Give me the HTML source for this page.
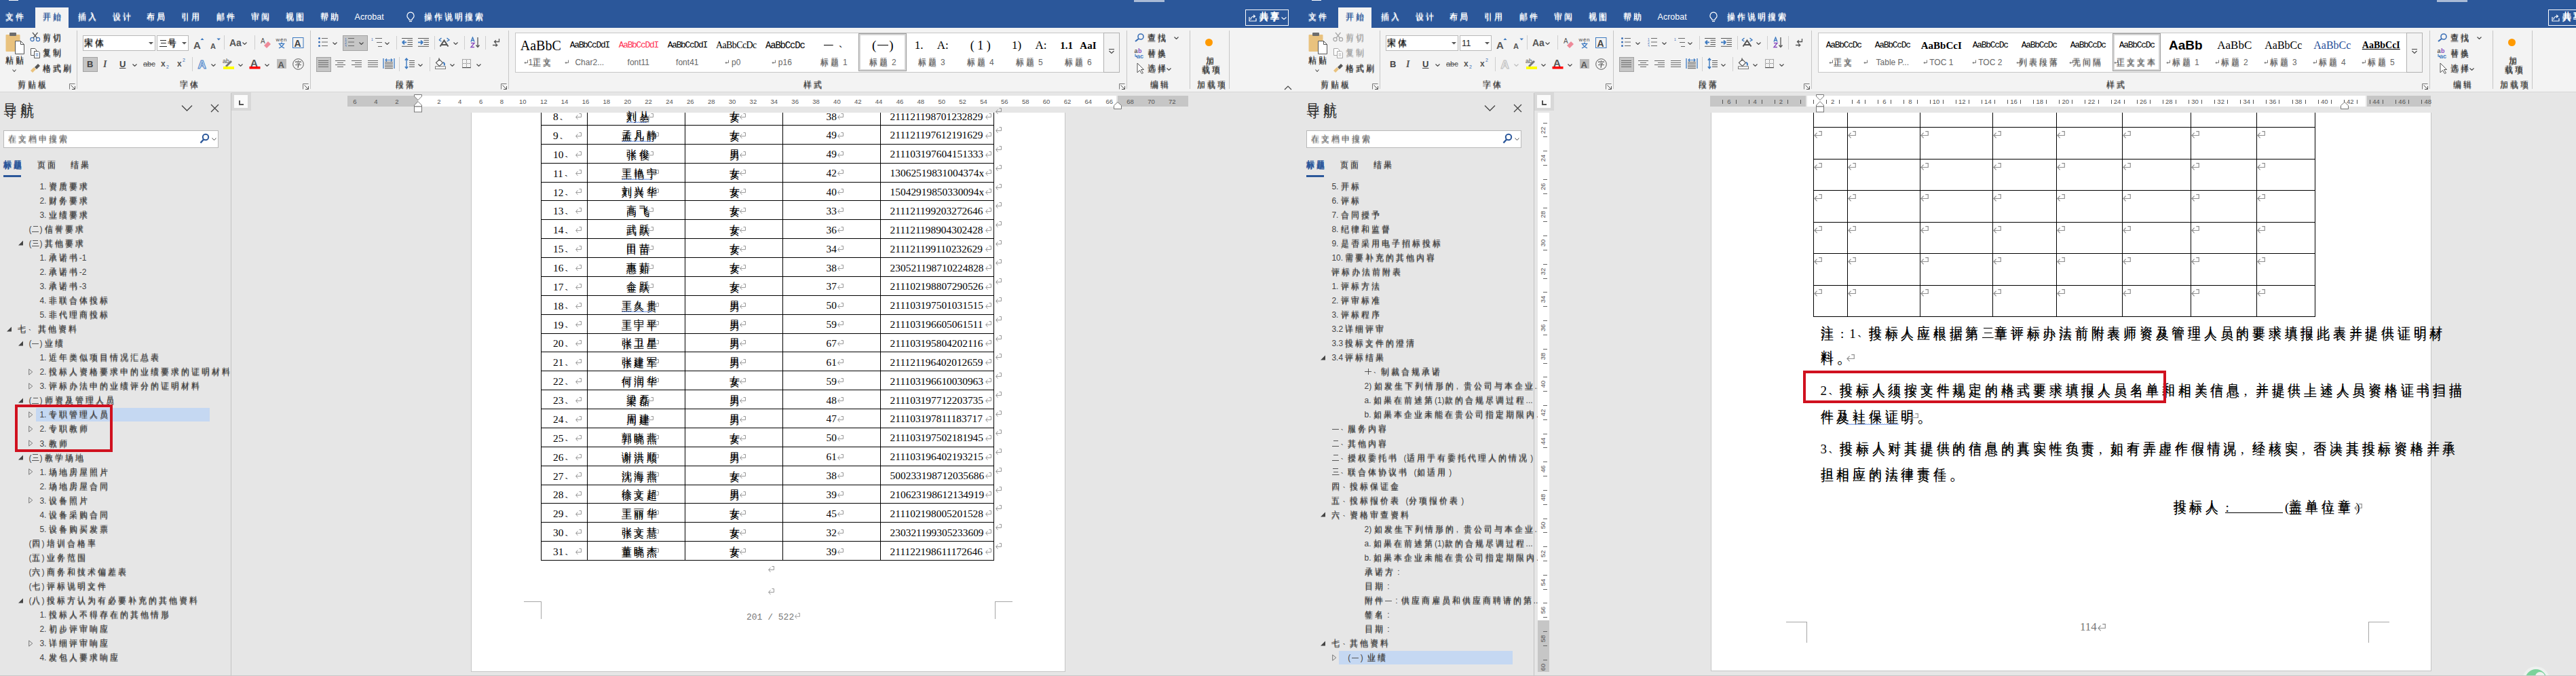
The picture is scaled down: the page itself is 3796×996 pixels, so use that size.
<!DOCTYPE html><html><head><meta charset="utf-8"><style>
*{margin:0;padding:0}
body{width:3796px;height:996px;overflow:hidden;background:#e6e6e6;position:relative}
.w{position:absolute;top:0;height:996px;overflow:hidden;background:#e6e6e6}
.w div,.w svg{position:absolute}
.t{white-space:nowrap}
.ls{font-family:"Liberation Sans",sans-serif}
.lr{font-family:"Liberation Serif",serif}
.lm{font-family:"Liberation Mono",monospace}
.c{font-family:"Liberation Sans",sans-serif;line-height:0;letter-spacing:.25em;text-shadow:0 .2em 0 currentColor;vertical-align:.1em}
.p{display:inline-block;width:1em;line-height:0}
.g{display:inline-block;width:1em;height:.8em;vertical-align:-.02em;background-repeat:no-repeat}
.g1{background-image:linear-gradient(currentColor,currentColor);background-size:.86em .075em;background-position:.07em .42em}
.g2{background-image:linear-gradient(currentColor,currentColor),linear-gradient(currentColor,currentColor);background-size:.6em .075em,.86em .075em;background-position:.2em .08em,.07em .72em}
.g3{background-image:linear-gradient(currentColor,currentColor),linear-gradient(currentColor,currentColor),linear-gradient(currentColor,currentColor);background-size:.7em .075em,.6em .075em,.88em .075em;background-position:.15em .02em,.2em .38em,.06em .74em}
.g10{background-image:linear-gradient(currentColor,currentColor),linear-gradient(currentColor,currentColor);background-size:.86em .075em,.075em .9em;background-position:.07em .36em,.46em -.05em}
svg text{white-space:pre}
</style></head><body>
<svg width="0" height="0" style="position:absolute"><defs><symbol id="rt" viewBox="0 0 12 11"><path d="M7.3 0.6H11.3V6.5H0.9M4.6 2.7L0.9 6.5L4.6 10.3" fill="none" stroke="#8f8f8f" stroke-width="1.15"/></symbol></defs></svg>
<div class="w" style="left:0;width:1905px">
<div style="left:-30px;top:0px;width:1950px;height:41px;background:#2b579a"></div>
<div style="left:13px;top:0px;width:14px;height:1px;background:#fff"></div>
<div style="left:1671px;top:0px;width:45px;height:3px;background:#aabbd6"></div>
<div style="left:52px;top:11px;width:49px;height:30px;background:#f3f3f3"></div>
<div class="t ls" style="top:17.4px;font-size:12px;line-height:16px;color:#fff;left:8px;"><span class=c>文件</span></div>
<div class="t ls" style="top:17.4px;font-size:12px;line-height:16px;color:#2b579a;left:63px;"><span class=c>开始</span></div>
<div class="t ls" style="top:17.4px;font-size:12px;line-height:16px;color:#fff;left:115px;"><span class=c>插入</span></div>
<div class="t ls" style="top:17.4px;font-size:12px;line-height:16px;color:#fff;left:166px;"><span class=c>设计</span></div>
<div class="t ls" style="top:17.4px;font-size:12px;line-height:16px;color:#fff;left:216px;"><span class=c>布局</span></div>
<div class="t ls" style="top:17.4px;font-size:12px;line-height:16px;color:#fff;left:267px;"><span class=c>引用</span></div>
<div class="t ls" style="top:17.4px;font-size:12px;line-height:16px;color:#fff;left:319px;"><span class=c>邮件</span></div>
<div class="t ls" style="top:17.4px;font-size:12px;line-height:16px;color:#fff;left:370px;"><span class=c>审阅</span></div>
<div class="t ls" style="top:17.4px;font-size:12px;line-height:16px;color:#fff;left:420.5px;"><span class=c>视图</span></div>
<div class="t ls" style="top:17.4px;font-size:12px;line-height:16px;color:#fff;left:471.5px;"><span class=c>帮助</span></div>
<div class="t ls" style="top:17.17px;font-size:12.5px;line-height:16px;color:#fff;left:522.6px;">Acrobat</div>
<svg style="left:598px;top:17px;" width="14" height="16" viewBox="0 0 14 16"><path d="M7 1.2a5 5 0 0 0-3 9c.8.7 1 1.3 1 2.3h4c0-1 .3-1.6 1-2.3a5 5 0 0 0-3-9z" fill="none" stroke="#fff" stroke-width="1.2"/><path d="M5 14.5h4" stroke="#fff" stroke-width="1.2"/></svg>
<div class="t ls" style="top:17.4px;font-size:12px;line-height:16px;color:#fff;left:625px;"><span class=c>操作说明搜索</span></div>
<div style="left:1835px;top:14px;width:64px;height:24px;border:1px solid #fff;box-sizing:border-box"></div>
<svg style="left:1840px;top:20px;" width="12" height="12" viewBox="0 0 12 12"><path d="M1 5v6h10V7" fill="none" stroke="#fff" stroke-width="1.2"/><path d="M3 9c0-3 2-5 6-5M7 2l2.5 2L7 6" fill="none" stroke="#fff" stroke-width="1.2"/></svg>
<div class="t ls" style="top:15.94px;font-size:13px;line-height:17px;color:#fff;left:1856px;font-weight:bold"><span class=c>共享</span></div>
<svg style="left:1888px;top:25px;" width="8" height="4" viewBox="0 0 8 4"><path d="M0.5 0.5L4 3.5L7.5 0.5" fill="none" stroke="#fff" stroke-width="1.1"/></svg>
<div style="left:-30px;top:41px;width:1950px;height:94px;background:#f3f3f3"></div>
<div style="left:-30px;top:135px;width:1950px;height:1px;background:#d8d8d8"></div>
<div style="left:113px;top:45px;width:1px;height:86px;background:#c6c6c6"></div>
<div style="left:457px;top:45px;width:1px;height:86px;background:#c6c6c6"></div>
<div style="left:749px;top:45px;width:1px;height:86px;background:#c6c6c6"></div>
<div style="left:1660px;top:45px;width:1px;height:86px;background:#c6c6c6"></div>
<div style="left:1753px;top:45px;width:1px;height:86px;background:#c6c6c6"></div>
<div style="left:1811px;top:45px;width:1px;height:86px;background:#c6c6c6"></div>
<div class="t ls" style="top:116.9px;font-size:12px;line-height:16px;color:#444;left:26px;"><span class=c>剪贴板</span></div>
<div class="t ls" style="top:116.9px;font-size:12px;line-height:16px;color:#444;left:265px;"><span class=c>字体</span></div>
<div class="t ls" style="top:116.9px;font-size:12px;line-height:16px;color:#444;left:583px;"><span class=c>段落</span></div>
<div class="t ls" style="top:116.9px;font-size:12px;line-height:16px;color:#444;left:1184px;"><span class=c>样式</span></div>
<div class="t ls" style="top:116.9px;font-size:12px;line-height:16px;color:#444;left:1695px;"><span class=c>编辑</span></div>
<div class="t ls" style="top:116.9px;font-size:12px;line-height:16px;color:#444;left:1764px;"><span class=c>加载项</span></div>
<svg style="left:101.5px;top:122.5px;" width="9" height="9" viewBox="0 0 9 9"><path d="M0.5 8.5V0.5H8.5" fill="none" stroke="#777" stroke-width="1"/><path d="M2.5 2.5L8 8M4 8.5H8.5V4" fill="none" stroke="#555" stroke-width="1"/></svg>
<svg style="left:446px;top:122.5px;" width="9" height="9" viewBox="0 0 9 9"><path d="M0.5 8.5V0.5H8.5" fill="none" stroke="#777" stroke-width="1"/><path d="M2.5 2.5L8 8M4 8.5H8.5V4" fill="none" stroke="#555" stroke-width="1"/></svg>
<svg style="left:738px;top:122.5px;" width="9" height="9" viewBox="0 0 9 9"><path d="M0.5 8.5V0.5H8.5" fill="none" stroke="#777" stroke-width="1"/><path d="M2.5 2.5L8 8M4 8.5H8.5V4" fill="none" stroke="#555" stroke-width="1"/></svg>
<svg style="left:1649px;top:122.5px;" width="9" height="9" viewBox="0 0 9 9"><path d="M0.5 8.5V0.5H8.5" fill="none" stroke="#777" stroke-width="1"/><path d="M2.5 2.5L8 8M4 8.5H8.5V4" fill="none" stroke="#555" stroke-width="1"/></svg>
<svg style="left:1892px;top:126px;" width="12" height="7" viewBox="0 0 12 7"><path d="M1 6L6 1L11 6" fill="none" stroke="#444" stroke-width="1.2"/></svg>
<svg style="left:7px;top:47px;" width="31" height="34" viewBox="0 0 31 34"><rect x="1.5" y="4" width="21" height="25" rx="1" fill="#e9c27e"/><rect x="7" y="1" width="10" height="5" rx="1" fill="#6d6d6d"/><path d="M15.5 13.5h8l5 5v14h-13z" fill="#fff" stroke="#555"/><path d="M23.5 13.5v5h5" fill="none" stroke="#555"/></svg>
<div class="t ls" style="top:80.9px;font-size:12px;line-height:16px;color:#333;left:8px;"><span class=c>粘贴</span></div>
<svg style="left:18px;top:102px;" width="6" height="4" viewBox="0 0 6 4"><path d="M0.5 0.5L3 3.5L5.5 0.5" fill="none" stroke="#555" stroke-width="1.1"/></svg>
<svg style="left:44px;top:47px;" width="16" height="15" viewBox="0 0 16 15"><circle cx="3.5" cy="11" r="2.6" fill="none" stroke="#3c70b6" stroke-width="1.2"/><circle cx="12" cy="11" r="2.6" fill="none" stroke="#3c70b6" stroke-width="1.2"/><path d="M5 9L11.5 1M10.5 9L4 1" stroke="#555" stroke-width="1.2"/></svg>
<div class="t ls" style="top:48.4px;font-size:12px;line-height:16px;color:#333;left:63px;"><span class=c>剪切</span></div>
<svg style="left:44px;top:70px;" width="16" height="16" viewBox="0 0 16 16"><path d="M1.5 1.5h6l2 2v8h-8z" fill="#fff" stroke="#555"/><path d="M6.5 5.5h6l2 2v8h-8z" fill="#fff" stroke="#555"/><path d="M8.5 9.5h4M8.5 12h4" stroke="#3c70b6"/></svg>
<div class="t ls" style="top:70.4px;font-size:12px;line-height:16px;color:#333;left:63px;"><span class=c>复制</span></div>
<svg style="left:44px;top:92px;" width="16" height="16" viewBox="0 0 16 16"><path d="M1 12l5-5 3 3-5 5z" fill="#e9c27e"/><path d="M7 7l5-5 3 3-5 5z" fill="#555"/></svg>
<div class="t ls" style="top:93.4px;font-size:12px;line-height:16px;color:#333;left:63px;"><span class=c>格式刷</span></div>
<div style="left:122px;top:52px;width:107px;height:23px;background:#fff;border:1px solid #b9b9b9;box-sizing:border-box"></div>
<div class="t ls" style="top:55.44px;font-size:13px;line-height:17px;color:#222;left:124px;"><span class=c>宋体</span></div>
<svg style="left:219px;top:62px;" width="7" height="4" viewBox="0 0 7 4"><path d="M0 0H7L3.5 3.5Z" fill="#555"/></svg>
<div style="left:231px;top:52px;width:47px;height:23px;background:#fff;border:1px solid #b9b9b9;box-sizing:border-box"></div>
<div class="t ls" style="top:55.44px;font-size:13px;line-height:17px;color:#222;left:234px;"><span class="g g3"></span><span class=c>号</span></div>
<svg style="left:268px;top:62px;" width="7" height="4" viewBox="0 0 7 4"><path d="M0 0H7L3.5 3.5Z" fill="#555"/></svg>
<svg style="left:285px;top:55px;" width="17" height="18" viewBox="0 0 17 18"><text x="0" y="17" font-family="Liberation Sans" font-weight="bold" font-size="15" fill="#555">A</text><path d="M10.5 4l2.5-3 2.5 3z" fill="#3c79c0"/></svg>
<svg style="left:310px;top:55px;" width="16" height="18" viewBox="0 0 16 18"><text x="0" y="17" font-family="Liberation Sans" font-weight="bold" font-size="11" fill="#555">A</text><path d="M9.5 1.5h5.5l-2.75 3z" fill="#3c79c0"/></svg>
<div style="left:330px;top:52px;width:1px;height:21px;background:#cfcfcf"></div>
<div class="t ls" style="top:54.19px;font-size:14px;line-height:18px;color:#555;left:338px;font-weight:bold">Aa</div>
<svg style="left:357px;top:62px;" width="7" height="4" viewBox="0 0 7 4"><path d="M0.5 0.5L3.5 3.5L6.5 0.5" fill="none" stroke="#444" stroke-width="1.1"/></svg>
<div style="left:375px;top:52px;width:1px;height:21px;background:#cfcfcf"></div>
<svg style="left:384px;top:54px;" width="16" height="17" viewBox="0 0 16 17"><text x="0" y="10" font-family="Liberation Sans" font-size="10" fill="#555">A</text><path d="M5 13l6-6 4 4-6 6z" fill="#ee8a99"/></svg>
<svg style="left:406px;top:54px;" width="18" height="18" viewBox="0 0 18 18"><text x="0.5" y="7" font-family="Liberation Sans" font-size="8" fill="#444" textLength="16">wén</text><path d="M9 8.3v1.6M4.5 10.4h9M6 10.8c1.3 3 3.5 4.8 7 6M12 10.8c-1.3 3-3.5 4.8-7 6" fill="none" stroke="#3c79c0" stroke-width="1.4"/></svg>
<svg style="left:431px;top:55px;" width="17" height="16" viewBox="0 0 17 16"><rect x="0.5" y="0.5" width="15.5" height="15" fill="none" stroke="#3c79c0"/><text x="2.5" y="13.5" font-family="Liberation Sans" font-weight="bold" font-size="14" fill="#444">A</text></svg>
<div style="left:122px;top:83.5px;width:22px;height:22.5px;background:#c6c6c6;border:1px solid #a3a3a3;box-sizing:border-box"></div>
<div class="t ls" style="top:86.18px;font-size:13px;line-height:17px;color:#444;left:128px;font-weight:bold">B</div>
<div class="t lr" style="top:85.81px;font-size:14px;line-height:18px;color:#555;left:152px;font-style:italic;font-weight:bold">I</div>
<div class="t ls" style="top:86.18px;font-size:13px;line-height:17px;color:#444;left:176px;font-weight:bold;text-decoration:underline">U</div>
<svg style="left:195px;top:94px;" width="7" height="4" viewBox="0 0 7 4"><path d="M0.5 0.5L3.5 3.5L6.5 0.5" fill="none" stroke="#444" stroke-width="1.1"/></svg>
<svg style="left:211px;top:87px;" width="18" height="14" viewBox="0 0 18 14"><text x="0" y="11" font-family="Liberation Sans" font-size="11" fill="#555">abc</text><path d="M0 7.5h18" stroke="#555"/></svg>
<svg style="left:237px;top:87px;" width="14" height="15" viewBox="0 0 14 15"><text x="0" y="11" font-family="Liberation Sans" font-weight="bold" font-size="12" fill="#555">x</text><text x="8" y="14" font-family="Liberation Sans" font-size="7" fill="#3c70b6">2</text></svg>
<svg style="left:261px;top:85px;" width="14" height="15" viewBox="0 0 14 15"><text x="0" y="13" font-family="Liberation Sans" font-weight="bold" font-size="12" fill="#555">x</text><text x="8" y="6" font-family="Liberation Sans" font-size="7" fill="#3c70b6">2</text></svg>
<div style="left:283px;top:84px;width:1px;height:21px;background:#cfcfcf"></div>
<svg style="left:291px;top:85px;" width="17" height="17" viewBox="0 0 17 17"><text x="0.5" y="15.5" font-family="Liberation Sans" font-weight="bold" font-size="17" fill="#fff" stroke="#4a84c8" stroke-width="1.1">A</text></svg>
<svg style="left:311px;top:94px;" width="7" height="4" viewBox="0 0 7 4"><path d="M0.5 0.5L3.5 3.5L6.5 0.5" fill="none" stroke="#444" stroke-width="1.1"/></svg>
<svg style="left:328px;top:85px;" width="18" height="18" viewBox="0 0 18 18"><text x="0" y="8" font-family="Liberation Sans" font-size="9" fill="#555">ab</text><path d="M4 12l8-8 2 2-8 8z" fill="#777"/><rect x="1" y="13" width="16" height="4" fill="#ffff00"/></svg>
<svg style="left:351px;top:94px;" width="7" height="4" viewBox="0 0 7 4"><path d="M0.5 0.5L3.5 3.5L6.5 0.5" fill="none" stroke="#444" stroke-width="1.1"/></svg>
<svg style="left:367px;top:85px;" width="18" height="18" viewBox="0 0 18 18"><text x="2" y="13" font-family="Liberation Sans" font-weight="bold" font-size="15" fill="#555">A</text><rect x="0.5" y="13" width="16" height="3.5" fill="#ff0000"/></svg>
<svg style="left:390px;top:94px;" width="7" height="4" viewBox="0 0 7 4"><path d="M0.5 0.5L3.5 3.5L6.5 0.5" fill="none" stroke="#444" stroke-width="1.1"/></svg>
<svg style="left:408px;top:87px;" width="14" height="14" viewBox="0 0 14 14"><rect width="14" height="14" fill="#bdbdbd"/><text x="1.5" y="12.5" font-family="Liberation Sans" font-weight="bold" font-size="13" fill="#555">A</text></svg>
<svg style="left:431px;top:86px;" width="17" height="17" viewBox="0 0 17 17"><circle cx="8.5" cy="8.5" r="7.8" fill="none" stroke="#555"/><path d="M8.5 3.2v1.3M4.6 6.2V4.8h7.8v1.4M6 7h4.8l-2.3 2M4.2 9.6h8.6M8.5 8.8v4.6l-1.4-.8" fill="none" stroke="#555" stroke-width="1"/></svg>
<svg style="left:469px;top:55px;" width="15" height="14" viewBox="0 0 15 14"><circle cx="1.5" cy="1.5" r="1.5" fill="#3c70b6"/><circle cx="1.5" cy="7" r="1.5" fill="#3c70b6"/><circle cx="1.5" cy="12.5" r="1.5" fill="#3c70b6"/><rect x="5" y="1.0" width="9" height="1" fill="#666"/><rect x="5" y="6.5" width="9" height="1" fill="#666"/><rect x="5" y="12.0" width="9" height="1" fill="#666"/></svg>
<svg style="left:490px;top:62px;" width="7" height="4" viewBox="0 0 7 4"><path d="M0.5 0.5L3.5 3.5L6.5 0.5" fill="none" stroke="#444" stroke-width="1.1"/></svg>
<div style="left:505px;top:52px;width:36.5px;height:22.5px;background:#c6c6c6;border:1px solid #a3a3a3;box-sizing:border-box"></div>
<svg style="left:508px;top:55px;" width="15" height="14" viewBox="0 0 15 14"><text x="0" y="5" font-family="Liberation Sans" font-size="5" fill="#3c70b6">1</text><text x="0" y="10" font-family="Liberation Sans" font-size="5" fill="#3c70b6">2</text><text x="0" y="15" font-family="Liberation Sans" font-size="5" fill="#3c70b6">3</text><rect x="5" y="1.0" width="9" height="1" fill="#666"/><rect x="5" y="6.5" width="9" height="1" fill="#666"/><rect x="5" y="12.0" width="9" height="1" fill="#666"/></svg>
<svg style="left:529px;top:62px;" width="7" height="4" viewBox="0 0 7 4"><path d="M0.5 0.5L3.5 3.5L6.5 0.5" fill="none" stroke="#444" stroke-width="1.1"/></svg>
<svg style="left:547px;top:55px;" width="17" height="14" viewBox="0 0 17 14"><text x="0" y="5" font-family="Liberation Sans" font-size="5" fill="#3c70b6">1</text><rect x="6" y="1" width="10" height="1" fill="#666"/><rect x="8" y="7" width="8" height="1" fill="#666"/><rect x="10" y="13" width="6" height="1" fill="#666"/></svg>
<svg style="left:567px;top:62px;" width="7" height="4" viewBox="0 0 7 4"><path d="M0.5 0.5L3.5 3.5L6.5 0.5" fill="none" stroke="#444" stroke-width="1.1"/></svg>
<div style="left:584px;top:53px;width:1px;height:20px;background:#cfcfcf"></div>
<svg style="left:591px;top:55px;" width="18" height="15" viewBox="0 0 18 15"><path d="M1 1.5H17M9.5 4.3H17M9.5 7.4H17M9.5 10.5H17M1 13.3H17" stroke="#555" stroke-width="1"/><path d="M1.8 7.4L5 4.6M1.8 7.4L5 10.2M1.8 7.4H8" fill="none" stroke="#3c79c0" stroke-width="1.9"/></svg>
<svg style="left:615px;top:55px;" width="18" height="15" viewBox="0 0 18 15"><path d="M1 1.5H17M9.5 4.3H17M9.5 7.4H17M9.5 10.5H17M1 13.3H17" stroke="#555" stroke-width="1"/><path d="M8.2 7.4L5 4.6M8.2 7.4L5 10.2M8.2 7.4H1" fill="none" stroke="#3c79c0" stroke-width="1.9"/></svg>
<div style="left:640px;top:53px;width:1px;height:20px;background:#cfcfcf"></div>
<svg style="left:646px;top:54px;" width="18" height="16" viewBox="0 0 18 16"><path d="M2.5 14.5L8.5 5.5L14.5 14.5M4.5 12H12.5" fill="none" stroke="#555" stroke-width="2"/><path d="M1 5L4.5 2M1 5L4.5 7M12.5 2L16 5L12.5 7" fill="none" stroke="#3c79c0" stroke-width="1.4"/></svg>
<svg style="left:668px;top:62px;" width="7" height="4" viewBox="0 0 7 4"><path d="M0.5 0.5L3.5 3.5L6.5 0.5" fill="none" stroke="#444" stroke-width="1.1"/></svg>
<div style="left:684px;top:53px;width:1px;height:20px;background:#cfcfcf"></div>
<svg style="left:692px;top:54px;" width="16" height="17" viewBox="0 0 16 17"><path d="M2 7.5L4.5 1L7 7.5M2.8 5.5H6.2" fill="none" stroke="#3c79c0" stroke-width="1.3"/><path d="M2 9.5H7L2 15.5H7" fill="none" stroke="#8a4fbf" stroke-width="1.4"/><path d="M12 1V15M9.5 12.5L12 15.5L14.5 12.5" fill="none" stroke="#555" stroke-width="1.3"/></svg>
<div style="left:715px;top:53px;width:1px;height:20px;background:#cfcfcf"></div>
<svg style="left:725px;top:56px;" width="12" height="14" viewBox="0 0 12 14"><path d="M10.5 1V5.5H3.5M5.8 3.2L3.5 5.5L5.8 7.8" fill="none" stroke="#555" stroke-width="1.3"/><path d="M1 10.5H7.5M5.5 8.5L7.8 10.5L5.5 12.5" fill="none" stroke="#555" stroke-width="1.3"/></svg>
<div style="left:466px;top:83.5px;width:22px;height:22px;background:#c6c6c6;border:1px solid #a3a3a3;box-sizing:border-box"></div>
<svg style="left:469px;top:89px;" width="15" height="11" viewBox="0 0 15 11"><rect x="0" y="0" width="15" height="1" fill="#666"/><rect x="0" y="3" width="15" height="1" fill="#666"/><rect x="0" y="6" width="15" height="1" fill="#666"/><rect x="0" y="9" width="15" height="1" fill="#666"/></svg>
<svg style="left:494px;top:89px;" width="15" height="11" viewBox="0 0 15 11"><rect x="0" y="0" width="15" height="1" fill="#666"/><rect x="3" y="3" width="9" height="1" fill="#666"/><rect x="0" y="6" width="15" height="1" fill="#666"/><rect x="3" y="9" width="9" height="1" fill="#666"/></svg>
<svg style="left:518px;top:89px;" width="15" height="11" viewBox="0 0 15 11"><rect x="0" y="0" width="15" height="1" fill="#666"/><rect x="5" y="3" width="10" height="1" fill="#666"/><rect x="0" y="6" width="15" height="1" fill="#666"/><rect x="5" y="9" width="10" height="1" fill="#666"/></svg>
<svg style="left:542px;top:89px;" width="15" height="11" viewBox="0 0 15 11"><rect x="0" y="0" width="15" height="1" fill="#666"/><rect x="0" y="3" width="15" height="1" fill="#666"/><rect x="0" y="6" width="15" height="1" fill="#666"/><rect x="0" y="9" width="15" height="1" fill="#666"/></svg>
<svg style="left:564px;top:85px;" width="18" height="17" viewBox="0 0 18 17"><rect x="3" y="6.0" width="12" height="1" fill="#555"/><rect x="3" y="8.3" width="12" height="1" fill="#555"/><rect x="3" y="10.6" width="12" height="1" fill="#555"/><rect x="3" y="12.899999999999999" width="12" height="1" fill="#555"/><rect x="3" y="15.2" width="12" height="1" fill="#555"/><path d="M1 1V16M17 1V16" stroke="#3c79c0" stroke-width="1.3"/><path d="M4 3.5H14M6 1.5L4 3.5L6 5.5M12 1.5L14 3.5L12 5.5" fill="none" stroke="#3c79c0" stroke-width="1.2"/></svg>
<div style="left:588px;top:84px;width:1px;height:21px;background:#cfcfcf"></div>
<svg style="left:596px;top:85px;" width="16" height="17" viewBox="0 0 16 17"><path d="M7 4.5H15M7 7.5H15M7 10.5H15M7 13.5H15" stroke="#555" stroke-width="1"/><path d="M3 1.5V15.5M0.8 3.8L3 1.2L5.2 3.8M0.8 13.2L3 15.8L5.2 13.2" fill="none" stroke="#3c79c0" stroke-width="1.4"/></svg>
<svg style="left:616px;top:94px;" width="7" height="4" viewBox="0 0 7 4"><path d="M0.5 0.5L3.5 3.5L6.5 0.5" fill="none" stroke="#444" stroke-width="1.1"/></svg>
<div style="left:633px;top:84px;width:1px;height:21px;background:#cfcfcf"></div>
<svg style="left:640px;top:85px;" width="18" height="18" viewBox="0 0 18 18"><path d="M2.5 7.5L7.5 2.5L12.5 7.5L7.5 12.5Z" fill="#fff" stroke="#555" stroke-width="1.1"/><path d="M7 0.5V5" stroke="#555" stroke-width="1.3"/><path d="M13 7c2 .8 2.5 2.5 1.5 4.5" fill="none" stroke="#3c79c0" stroke-width="2"/><rect x="1.5" y="13" width="15" height="3.5" fill="#fff" stroke="#777"/></svg>
<svg style="left:663px;top:94px;" width="7" height="4" viewBox="0 0 7 4"><path d="M0.5 0.5L3.5 3.5L6.5 0.5" fill="none" stroke="#444" stroke-width="1.1"/></svg>
<svg style="left:680px;top:86px;" width="15" height="15" viewBox="0 0 15 15"><rect x="1" y="1" width="1" height="1" fill="#555"/><rect x="3" y="1" width="1" height="1" fill="#555"/><rect x="5" y="1" width="1" height="1" fill="#555"/><rect x="7" y="1" width="1" height="1" fill="#555"/><rect x="9" y="1" width="1" height="1" fill="#555"/><rect x="11" y="1" width="1" height="1" fill="#555"/><rect x="13" y="1" width="1" height="1" fill="#555"/><rect x="1" y="7" width="1" height="1" fill="#555"/><rect x="3" y="7" width="1" height="1" fill="#555"/><rect x="5" y="7" width="1" height="1" fill="#555"/><rect x="7" y="7" width="1" height="1" fill="#555"/><rect x="9" y="7" width="1" height="1" fill="#555"/><rect x="11" y="7" width="1" height="1" fill="#555"/><rect x="13" y="7" width="1" height="1" fill="#555"/><rect x="1" y="3" width="1" height="1" fill="#555"/><rect x="1" y="5" width="1" height="1" fill="#555"/><rect x="1" y="7" width="1" height="1" fill="#555"/><rect x="1" y="9" width="1" height="1" fill="#555"/><rect x="1" y="11" width="1" height="1" fill="#555"/><rect x="1" y="13" width="1" height="1" fill="#555"/><rect x="7" y="3" width="1" height="1" fill="#555"/><rect x="7" y="5" width="1" height="1" fill="#555"/><rect x="7" y="7" width="1" height="1" fill="#555"/><rect x="7" y="9" width="1" height="1" fill="#555"/><rect x="7" y="11" width="1" height="1" fill="#555"/><rect x="7" y="13" width="1" height="1" fill="#555"/><rect x="13" y="3" width="1" height="1" fill="#555"/><rect x="13" y="5" width="1" height="1" fill="#555"/><rect x="13" y="7" width="1" height="1" fill="#555"/><rect x="13" y="9" width="1" height="1" fill="#555"/><rect x="13" y="11" width="1" height="1" fill="#555"/><rect x="13" y="13" width="1" height="1" fill="#555"/><rect x="1" y="13" width="13" height="1.2" fill="#444"/></svg>
<svg style="left:702px;top:94px;" width="7" height="4" viewBox="0 0 7 4"><path d="M0.5 0.5L3.5 3.5L6.5 0.5" fill="none" stroke="#444" stroke-width="1.1"/></svg>
<div style="left:759px;top:47.5px;width:868px;height:59.5px;background:#fff;border:1px solid #c6c6c6;box-sizing:border-box;border-right:none"></div>
<div style="left:1626px;top:47.5px;width:24px;height:59.5px;background:#f3f3f3;border:1px solid #b1b1b1;box-sizing:border-box"></div>
<svg style="left:1633px;top:72px;" width="10" height="8" viewBox="0 0 10 8"><path d="M1 0.5h8M1.5 3l3.5 3.5L8.5 3" fill="none" stroke="#444" stroke-width="1.1"/></svg>
<svg style="left:1672px;top:49px;" width="15" height="13" viewBox="0 0 15 13"><circle cx="9" cy="5" r="4" fill="none" stroke="#3c70b6" stroke-width="1.6"/><path d="M6 8l-5 4" stroke="#3c70b6" stroke-width="2.2"/></svg>
<div class="t ls" style="top:47.9px;font-size:12px;line-height:16px;color:#333;left:1690.6px;"><span class=c>查找</span></div>
<svg style="left:1730px;top:54px;" width="7" height="4" viewBox="0 0 7 4"><path d="M0.5 0.5L3.5 3.5L6.5 0.5" fill="none" stroke="#444" stroke-width="1.1"/></svg>
<svg style="left:1671px;top:70px;" width="18" height="16" viewBox="0 0 18 16"><text x="0.5" y="7.5" font-family="Liberation Sans" font-weight="bold" font-size="9" fill="#555">a</text><text x="6" y="7.5" font-family="Liberation Sans" font-weight="bold" font-size="9" fill="#8a4fbf">b</text><text x="4" y="15.5" font-family="Liberation Sans" font-weight="bold" font-size="9" fill="#3c79c0">ac</text><path d="M2 9.5v3.5h2.5M3.3 11.8l1.2 1.2-1.2 1.2" fill="none" stroke="#3c79c0" stroke-width="1.1"/></svg>
<div class="t ls" style="top:70.9px;font-size:12px;line-height:16px;color:#333;left:1690.6px;"><span class=c>替换</span></div>
<svg style="left:1675px;top:92px;" width="11" height="17" viewBox="0 0 11 17"><path d="M1 1v14l3.5-3.5 3 5 2-1-3-5h4z" fill="#fff" stroke="#555"/></svg>
<div class="t ls" style="top:93.4px;font-size:12px;line-height:16px;color:#333;left:1690.6px;"><span class=c>选择</span></div>
<svg style="left:1719px;top:100px;" width="7" height="4" viewBox="0 0 7 4"><path d="M0.5 0.5L3.5 3.5L6.5 0.5" fill="none" stroke="#444" stroke-width="1.1"/></svg>
<div style="left:1776px;top:57px;width:11px;height:11px;border-radius:50%;background:#ff9a00;filter:blur(0.4px)"></div>
<div class="t ls" style="top:81.9px;font-size:12px;line-height:16px;color:#333;left:1777px;"><span class=c>加</span></div>
<div class="t ls" style="top:95.4px;font-size:12px;line-height:16px;color:#333;left:1771px;"><span class=c>载项</span></div>
<div style="left:765.8px;top:50px;width:62px;height:30px;overflow:hidden">
<div class="t lr" style="left:0;top:0;width:62px;text-align:center;font-size:20px;line-height:30px;color:#000;white-space:pre;;top:2.3px">AaBbC</div>
</div>
<div class="t ls" style="top:83.9px;font-size:12px;line-height:16px;color:#666;left:760.8px;width:72px;text-align:center;">1<span class=c>正文</span></div>
<svg style="left:771.5px;top:88px;" width="7" height="7" viewBox="0 0 7 7"><path d="M5.5 0.5v4H1M2.5 3L1 4.5 2.5 6" fill="none" stroke="#777"/></svg>
<div style="left:837.8px;top:50px;width:62px;height:30px;overflow:hidden">
<div class="t lm" style="left:0;top:0;width:62px;text-align:center;font-size:13px;line-height:30px;color:#000;white-space:pre;letter-spacing:-1.35px;top:2.2px">AaBbCcDdI</div>
</div>
<div class="t ls" style="top:83.9px;font-size:12px;line-height:16px;color:#666;left:832.8px;width:72px;text-align:center;">Char2...</div>
<svg style="left:832.4px;top:88px;" width="7" height="7" viewBox="0 0 7 7"><path d="M5.5 0.5v4H1M2.5 3L1 4.5 2.5 6" fill="none" stroke="#777"/></svg>
<div style="left:909.8px;top:50px;width:62px;height:30px;overflow:hidden">
<div class="t lm" style="left:0;top:0;width:62px;text-align:center;font-size:13px;line-height:30px;color:#ff3355;white-space:pre;letter-spacing:-1.35px;top:2.2px">AaBbCcDdI</div>
</div>
<div class="t ls" style="top:83.9px;font-size:12px;line-height:16px;color:#666;left:904.8px;width:72px;text-align:center;">font11</div>
<div style="left:981.8px;top:50px;width:62px;height:30px;overflow:hidden">
<div class="t lm" style="left:0;top:0;width:62px;text-align:center;font-size:13px;line-height:30px;color:#000;white-space:pre;letter-spacing:-1.35px;top:2.2px">AaBbCcDdI</div>
</div>
<div class="t ls" style="top:83.9px;font-size:12px;line-height:16px;color:#666;left:976.8px;width:72px;text-align:center;">font41</div>
<div style="left:1053.8px;top:50px;width:62px;height:30px;overflow:hidden">
<div class="t lr" style="left:0;top:0;width:62px;text-align:center;font-size:14px;line-height:30px;color:#000;white-space:pre;letter-spacing:-0.6px;top:2.21px">AaBbCcDc</div>
</div>
<div class="t ls" style="top:83.9px;font-size:12px;line-height:16px;color:#666;left:1048.8px;width:72px;text-align:center;">p0</div>
<svg style="left:1068.2px;top:88px;" width="7" height="7" viewBox="0 0 7 7"><path d="M5.5 0.5v4H1M2.5 3L1 4.5 2.5 6" fill="none" stroke="#777"/></svg>
<div style="left:1125.8px;top:50px;width:62px;height:30px;overflow:hidden">
<div class="t lm" style="left:0;top:0;width:62px;text-align:center;font-size:14px;line-height:30px;color:#000;white-space:pre;letter-spacing:-1.2px;top:2.21px">AaBbCcDc</div>
</div>
<div class="t ls" style="top:83.9px;font-size:12px;line-height:16px;color:#666;left:1120.8px;width:72px;text-align:center;">p16</div>
<svg style="left:1136.9px;top:88px;" width="7" height="7" viewBox="0 0 7 7"><path d="M5.5 0.5v4H1M2.5 3L1 4.5 2.5 6" fill="none" stroke="#777"/></svg>
<div style="left:1197.8px;top:50px;width:62px;height:30px;overflow:hidden">
<div class="t ls" style="left:0;top:0;width:62px;text-align:center;font-size:16px;line-height:30px;color:#000;white-space:pre;;top:2.24px"><span class="g g1"></span><span class=p><span style="position:relative;top:.5em;left:.12em">`</span></span></div>
</div>
<div class="t ls" style="top:83.9px;font-size:12px;line-height:16px;color:#666;left:1192.8px;width:72px;text-align:center;"><span class=c>标题</span> 1</div>
<div style="left:1265.2px;top:48.7px;width:71.3px;height:55.9px;border:1px solid #9e9e9e;box-sizing:border-box"></div>
<div style="left:1266.2px;top:49.7px;width:69.3px;height:53.9px;border:2px solid #d6d6d6;box-sizing:border-box"></div>
<div style="left:1269.8px;top:50px;width:62px;height:30px;overflow:hidden">
<div class="t lr" style="left:0;top:0;width:62px;text-align:center;font-size:19px;line-height:30px;color:#000;white-space:pre;;top:2.29px">(<span class="g g1"></span>)</div>
</div>
<div class="t ls" style="top:83.9px;font-size:12px;line-height:16px;color:#666;left:1264.8px;width:72px;text-align:center;"><span class=c>标题</span> 2</div>
<div style="left:1341.8px;top:50px;width:62px;height:30px;overflow:hidden">
<div class="t lr" style="left:0;top:0;width:62px;text-align:center;font-size:17px;line-height:30px;color:#000;white-space:pre;;top:2.26px">1.     A:</div>
</div>
<div class="t ls" style="top:83.9px;font-size:12px;line-height:16px;color:#666;left:1336.8px;width:72px;text-align:center;"><span class=c>标题</span> 3</div>
<div style="left:1413.8px;top:50px;width:62px;height:30px;overflow:hidden">
<div class="t lr" style="left:0;top:0;width:62px;text-align:center;font-size:18px;line-height:30px;color:#000;white-space:pre;;top:2.27px">( 1 )</div>
</div>
<div class="t ls" style="top:83.9px;font-size:12px;line-height:16px;color:#666;left:1408.8px;width:72px;text-align:center;"><span class=c>标题</span> 4</div>
<div style="left:1485.8px;top:50px;width:62px;height:30px;overflow:hidden">
<div class="t lr" style="left:0;top:0;width:62px;text-align:center;font-size:17px;line-height:30px;color:#000;white-space:pre;;top:2.26px">1)     A:</div>
</div>
<div class="t ls" style="top:83.9px;font-size:12px;line-height:16px;color:#666;left:1480.8px;width:72px;text-align:center;"><span class=c>标题</span> 5</div>
<div style="left:1557.8px;top:50px;width:62px;height:30px;overflow:hidden">
<div class="t lr" style="left:0;top:0;width:62px;text-align:center;font-size:15px;line-height:30px;color:#000;white-space:pre;font-weight:bold;top:2.22px">1.1   AaI</div>
</div>
<div class="t ls" style="top:83.9px;font-size:12px;line-height:16px;color:#666;left:1552.8px;width:72px;text-align:center;"><span class=c>标题</span> 6</div>
<div style="left:340px;top:137px;width:1px;height:859px;background:#c2c2c2"></div>
<div class="t ls" style="top:150.17px;font-size:20px;line-height:26px;color:#333;left:5px;"><span class=c>导航</span></div>
<svg style="left:267px;top:154px;" width="17" height="11" viewBox="0 0 17 11"><path d="M1 1.5l7.5 7.5 7.5-7.5" fill="none" stroke="#444" stroke-width="1.3"/></svg>
<svg style="left:310px;top:153px;" width="13" height="13" viewBox="0 0 13 13"><path d="M1 1l11 11M12 1L1 12" fill="none" stroke="#444" stroke-width="1.3"/></svg>
<div style="left:5px;top:192px;width:317px;height:26px;background:#fff;border:1px solid #b9b9b9;box-sizing:border-box"></div>
<div class="t ls" style="top:196.9px;font-size:12px;line-height:16px;color:#777;left:12px;"><span class=c>在文档中搜索</span></div>
<svg style="left:294px;top:196px;" width="15" height="16" viewBox="0 0 15 16"><circle cx="9" cy="6" r="4.2" fill="none" stroke="#2b579a" stroke-width="2"/><path d="M6 9.5l-4.5 5" stroke="#2b579a" stroke-width="2.4"/></svg>
<svg style="left:312px;top:203px;" width="7" height="4" viewBox="0 0 7 4"><path d="M0.5 0.5l3 3 3-3" fill="none" stroke="#444"/></svg>
<div class="t ls" style="top:235.4px;font-size:12px;line-height:16px;color:#2b579a;left:5px;font-weight:bold"><span class=c>标题</span></div>
<div class="t ls" style="top:235.4px;font-size:12px;line-height:16px;color:#444;left:55px;"><span class=c>页面</span></div>
<div class="t ls" style="top:235.4px;font-size:12px;line-height:16px;color:#444;left:103.5px;"><span class=c>结果</span></div>
<div style="left:5px;top:258px;width:26px;height:3px;background:#2b579a"></div>
<div style="left:53px;top:601px;width:256px;height:20px;background:#c5d8f2"></div>
<div class="t ls" style="top:266.6px;font-size:12px;line-height:16px;color:#444;left:58.4px;">1. <span class=c>资质要求</span></div>
<div class="t ls" style="top:287.65px;font-size:12px;line-height:16px;color:#444;left:58.4px;">2. <span class=c>财务要求</span></div>
<div class="t ls" style="top:308.7px;font-size:12px;line-height:16px;color:#444;left:58.4px;">3. <span class=c>业绩要求</span></div>
<div class="t ls" style="top:329.75px;font-size:12px;line-height:16px;color:#444;left:42.6px;">(<span class="g g2"></span>) <span class=c>信誉要求</span></div>
<svg style="left:26.6px;top:354.4px;" width="8" height="8" viewBox="0 0 8 8"><path d="M7 0.5V7.5H0z" fill="#444"/></svg>
<div class="t ls" style="top:350.8px;font-size:12px;line-height:16px;color:#444;left:42.6px;">(<span class="g g3"></span>) <span class=c>其他要求</span></div>
<div class="t ls" style="top:371.85px;font-size:12px;line-height:16px;color:#444;left:58.4px;">1. <span class=c>承诺书</span>-1</div>
<div class="t ls" style="top:392.9px;font-size:12px;line-height:16px;color:#444;left:58.4px;">2. <span class=c>承诺书</span>-2</div>
<div class="t ls" style="top:413.95px;font-size:12px;line-height:16px;color:#444;left:58.4px;">3. <span class=c>承诺书</span>-3</div>
<div class="t ls" style="top:435px;font-size:12px;line-height:16px;color:#444;left:58.4px;">4. <span class=c>非联合体投标</span></div>
<div class="t ls" style="top:456.05px;font-size:12px;line-height:16px;color:#444;left:58.4px;">5. <span class=c>非代理商投标</span></div>
<svg style="left:9.6px;top:480.7px;" width="8" height="8" viewBox="0 0 8 8"><path d="M7 0.5V7.5H0z" fill="#444"/></svg>
<div class="t ls" style="top:477.1px;font-size:12px;line-height:16px;color:#444;left:25.6px;"><span class=c>七</span><span class=p><span style="position:relative;top:.5em;left:.12em">`</span></span> <span class=c>其他资料</span></div>
<svg style="left:26.6px;top:501.75px;" width="8" height="8" viewBox="0 0 8 8"><path d="M7 0.5V7.5H0z" fill="#444"/></svg>
<div class="t ls" style="top:498.15px;font-size:12px;line-height:16px;color:#444;left:42.6px;">(<span class="g g1"></span>) <span class=c>业绩</span></div>
<div class="t ls" style="top:519.2px;font-size:12px;line-height:16px;color:#444;left:58.4px;">1. <span class=c>近年类似项目情况汇总表</span></div>
<svg style="left:42.4px;top:542.85px;" width="7" height="10" viewBox="0 0 7 10"><path d="M0.7 0.8L5.8 5 0.7 9.2z" fill="none" stroke="#777" stroke-width="1"/></svg>
<div class="t ls" style="top:540.25px;font-size:12px;line-height:16px;color:#444;left:58.4px;">2. <span class=c>投标人资格要求中的业绩要求的证明材料</span></div>
<svg style="left:42.4px;top:563.9px;" width="7" height="10" viewBox="0 0 7 10"><path d="M0.7 0.8L5.8 5 0.7 9.2z" fill="none" stroke="#777" stroke-width="1"/></svg>
<div class="t ls" style="top:561.3px;font-size:12px;line-height:16px;color:#444;left:58.4px;">3. <span class=c>评标办法中的业绩评分的证明材料</span></div>
<svg style="left:26.6px;top:585.95px;" width="8" height="8" viewBox="0 0 8 8"><path d="M7 0.5V7.5H0z" fill="#444"/></svg>
<div class="t ls" style="top:582.35px;font-size:12px;line-height:16px;color:#444;left:42.6px;">(<span class="g g2"></span>) <span class=c>师资及管理人员</span></div>
<svg style="left:42.4px;top:606px;" width="7" height="10" viewBox="0 0 7 10"><path d="M0.7 0.8L5.8 5 0.7 9.2z" fill="none" stroke="#777" stroke-width="1"/></svg>
<div class="t ls" style="top:603.4px;font-size:12px;line-height:16px;color:#444;left:58.4px;">1. <span class=c>专职管理人员</span></div>
<svg style="left:42.4px;top:627.05px;" width="7" height="10" viewBox="0 0 7 10"><path d="M0.7 0.8L5.8 5 0.7 9.2z" fill="none" stroke="#777" stroke-width="1"/></svg>
<div class="t ls" style="top:624.45px;font-size:12px;line-height:16px;color:#444;left:58.4px;">2. <span class=c>专职教师</span></div>
<svg style="left:42.4px;top:648.1px;" width="7" height="10" viewBox="0 0 7 10"><path d="M0.7 0.8L5.8 5 0.7 9.2z" fill="none" stroke="#777" stroke-width="1"/></svg>
<div class="t ls" style="top:645.5px;font-size:12px;line-height:16px;color:#444;left:58.4px;">3. <span class=c>教师</span></div>
<svg style="left:26.6px;top:670.15px;" width="8" height="8" viewBox="0 0 8 8"><path d="M7 0.5V7.5H0z" fill="#444"/></svg>
<div class="t ls" style="top:666.55px;font-size:12px;line-height:16px;color:#444;left:42.6px;">(<span class="g g3"></span>) <span class=c>教学场地</span></div>
<svg style="left:42.4px;top:690.2px;" width="7" height="10" viewBox="0 0 7 10"><path d="M0.7 0.8L5.8 5 0.7 9.2z" fill="none" stroke="#777" stroke-width="1"/></svg>
<div class="t ls" style="top:687.6px;font-size:12px;line-height:16px;color:#444;left:58.4px;">1. <span class=c>场地房屋照片</span></div>
<div class="t ls" style="top:708.65px;font-size:12px;line-height:16px;color:#444;left:58.4px;">2. <span class=c>场地房屋合同</span></div>
<svg style="left:42.4px;top:732.3px;" width="7" height="10" viewBox="0 0 7 10"><path d="M0.7 0.8L5.8 5 0.7 9.2z" fill="none" stroke="#777" stroke-width="1"/></svg>
<div class="t ls" style="top:729.7px;font-size:12px;line-height:16px;color:#444;left:58.4px;">3. <span class=c>设备照片</span></div>
<div class="t ls" style="top:750.75px;font-size:12px;line-height:16px;color:#444;left:58.4px;">4. <span class=c>设备采购合同</span></div>
<div class="t ls" style="top:771.8px;font-size:12px;line-height:16px;color:#444;left:58.4px;">5. <span class=c>设备购买发票</span></div>
<div class="t ls" style="top:792.85px;font-size:12px;line-height:16px;color:#444;left:42.6px;">(<span class=c>四</span>) <span class=c>培训合格率</span></div>
<div class="t ls" style="top:813.9px;font-size:12px;line-height:16px;color:#444;left:42.6px;">(<span class=c>五</span>) <span class=c>业务范围</span></div>
<div class="t ls" style="top:834.95px;font-size:12px;line-height:16px;color:#444;left:42.6px;">(<span class=c>六</span>) <span class=c>商务和技术偏差表</span></div>
<div class="t ls" style="top:856px;font-size:12px;line-height:16px;color:#444;left:42.6px;">(<span class=c>七</span>) <span class=c>评标说明文件</span></div>
<svg style="left:26.6px;top:880.65px;" width="8" height="8" viewBox="0 0 8 8"><path d="M7 0.5V7.5H0z" fill="#444"/></svg>
<div class="t ls" style="top:877.05px;font-size:12px;line-height:16px;color:#444;left:42.6px;">(<span class=c>八</span>) <span class=c>投标方认为有必要补充的其他资料</span></div>
<div class="t ls" style="top:898.1px;font-size:12px;line-height:16px;color:#444;left:58.4px;">1. <span class=c>投标人不得存在的其他情形</span></div>
<div class="t ls" style="top:919.15px;font-size:12px;line-height:16px;color:#444;left:58.4px;">2. <span class=c>初步评审响应</span></div>
<svg style="left:42.4px;top:942.8px;" width="7" height="10" viewBox="0 0 7 10"><path d="M0.7 0.8L5.8 5 0.7 9.2z" fill="none" stroke="#777" stroke-width="1"/></svg>
<div class="t ls" style="top:940.2px;font-size:12px;line-height:16px;color:#444;left:58.4px;">3. <span class=c>详细评审响应</span></div>
<div class="t ls" style="top:961.25px;font-size:12px;line-height:16px;color:#444;left:58.4px;">4. <span class=c>发包人要求响应</span></div>
<div style="left:22px;top:596px;width:144px;height:70px;border:4px solid #d0111f;box-sizing:border-box"></div>
<div style="left:341px;top:136px;width:29px;height:27px;background:#d8d8d8"></div>
<div style="left:345px;top:140px;width:20px;height:19px;background:#fbfbfb"></div>
<svg style="left:352px;top:148px;" width="7" height="7" viewBox="0 0 7 7"><path d="M1 0v6h6" fill="none" stroke="#555" stroke-width="2"/></svg>
<div style="left:512px;top:141px;width:104px;height:16px;background:#c6c6c6"></div>
<div style="left:616px;top:141px;width:1029px;height:16px;background:#fff"></div>
<div style="left:1647px;top:141px;width:104px;height:16px;background:#c6c6c6"></div>
<div class="t ls" style="top:143.63px;font-size:9.5px;line-height:12px;color:#555;left:508px;width:30px;text-align:center;">6</div>
<div class="t ls" style="top:143.63px;font-size:9.5px;line-height:12px;color:#555;left:539px;width:30px;text-align:center;">4</div>
<div class="t ls" style="top:143.63px;font-size:9.5px;line-height:12px;color:#555;left:570px;width:30px;text-align:center;">2</div>
<div class="t ls" style="top:143.63px;font-size:9.5px;line-height:12px;color:#555;left:631.87px;width:30px;text-align:center;">2</div>
<div class="t ls" style="top:143.63px;font-size:9.5px;line-height:12px;color:#555;left:662.74px;width:30px;text-align:center;">4</div>
<div class="t ls" style="top:143.63px;font-size:9.5px;line-height:12px;color:#555;left:693.61px;width:30px;text-align:center;">6</div>
<div class="t ls" style="top:143.63px;font-size:9.5px;line-height:12px;color:#555;left:724.48px;width:30px;text-align:center;">8</div>
<div class="t ls" style="top:143.63px;font-size:9.5px;line-height:12px;color:#555;left:755.35px;width:30px;text-align:center;">10</div>
<div class="t ls" style="top:143.63px;font-size:9.5px;line-height:12px;color:#555;left:786.22px;width:30px;text-align:center;">12</div>
<div class="t ls" style="top:143.63px;font-size:9.5px;line-height:12px;color:#555;left:817.09px;width:30px;text-align:center;">14</div>
<div class="t ls" style="top:143.63px;font-size:9.5px;line-height:12px;color:#555;left:847.96px;width:30px;text-align:center;">16</div>
<div class="t ls" style="top:143.63px;font-size:9.5px;line-height:12px;color:#555;left:878.83px;width:30px;text-align:center;">18</div>
<div class="t ls" style="top:143.63px;font-size:9.5px;line-height:12px;color:#555;left:909.7px;width:30px;text-align:center;">20</div>
<div class="t ls" style="top:143.63px;font-size:9.5px;line-height:12px;color:#555;left:940.57px;width:30px;text-align:center;">22</div>
<div class="t ls" style="top:143.63px;font-size:9.5px;line-height:12px;color:#555;left:971.44px;width:30px;text-align:center;">24</div>
<div class="t ls" style="top:143.63px;font-size:9.5px;line-height:12px;color:#555;left:1002.31px;width:30px;text-align:center;">26</div>
<div class="t ls" style="top:143.63px;font-size:9.5px;line-height:12px;color:#555;left:1033.18px;width:30px;text-align:center;">28</div>
<div class="t ls" style="top:143.63px;font-size:9.5px;line-height:12px;color:#555;left:1064.05px;width:30px;text-align:center;">30</div>
<div class="t ls" style="top:143.63px;font-size:9.5px;line-height:12px;color:#555;left:1094.92px;width:30px;text-align:center;">32</div>
<div class="t ls" style="top:143.63px;font-size:9.5px;line-height:12px;color:#555;left:1125.79px;width:30px;text-align:center;">34</div>
<div class="t ls" style="top:143.63px;font-size:9.5px;line-height:12px;color:#555;left:1156.66px;width:30px;text-align:center;">36</div>
<div class="t ls" style="top:143.63px;font-size:9.5px;line-height:12px;color:#555;left:1187.53px;width:30px;text-align:center;">38</div>
<div class="t ls" style="top:143.63px;font-size:9.5px;line-height:12px;color:#555;left:1218.4px;width:30px;text-align:center;">40</div>
<div class="t ls" style="top:143.63px;font-size:9.5px;line-height:12px;color:#555;left:1249.27px;width:30px;text-align:center;">42</div>
<div class="t ls" style="top:143.63px;font-size:9.5px;line-height:12px;color:#555;left:1280.14px;width:30px;text-align:center;">44</div>
<div class="t ls" style="top:143.63px;font-size:9.5px;line-height:12px;color:#555;left:1311.01px;width:30px;text-align:center;">46</div>
<div class="t ls" style="top:143.63px;font-size:9.5px;line-height:12px;color:#555;left:1341.88px;width:30px;text-align:center;">48</div>
<div class="t ls" style="top:143.63px;font-size:9.5px;line-height:12px;color:#555;left:1372.75px;width:30px;text-align:center;">50</div>
<div class="t ls" style="top:143.63px;font-size:9.5px;line-height:12px;color:#555;left:1403.62px;width:30px;text-align:center;">52</div>
<div class="t ls" style="top:143.63px;font-size:9.5px;line-height:12px;color:#555;left:1434.49px;width:30px;text-align:center;">54</div>
<div class="t ls" style="top:143.63px;font-size:9.5px;line-height:12px;color:#555;left:1465.36px;width:30px;text-align:center;">56</div>
<div class="t ls" style="top:143.63px;font-size:9.5px;line-height:12px;color:#555;left:1496.23px;width:30px;text-align:center;">58</div>
<div class="t ls" style="top:143.63px;font-size:9.5px;line-height:12px;color:#555;left:1527.1px;width:30px;text-align:center;">60</div>
<div class="t ls" style="top:143.63px;font-size:9.5px;line-height:12px;color:#555;left:1557.97px;width:30px;text-align:center;">62</div>
<div class="t ls" style="top:143.63px;font-size:9.5px;line-height:12px;color:#555;left:1588.84px;width:30px;text-align:center;">64</div>
<div class="t ls" style="top:143.63px;font-size:9.5px;line-height:12px;color:#555;left:1619.71px;width:30px;text-align:center;">66</div>
<div class="t ls" style="top:143.63px;font-size:9.5px;line-height:12px;color:#555;left:1650.58px;width:30px;text-align:center;">68</div>
<div class="t ls" style="top:143.63px;font-size:9.5px;line-height:12px;color:#555;left:1681.45px;width:30px;text-align:center;">70</div>
<div class="t ls" style="top:143.63px;font-size:9.5px;line-height:12px;color:#555;left:1712.32px;width:30px;text-align:center;">72</div>
<div style="left:694px;top:166px;width:876px;height:824px;background:#fff;border:1px solid #c6c6c6;border-top:none;box-sizing:border-box"></div>
<svg style="left:610px;top:138.5px;" width="13" height="27" viewBox="0 0 13 27"><path d="M0.5 0.5h11v2.5L6 8.5 0.5 3z" fill="#fff" stroke="#777"/><path d="M6 10.5L11.5 16v2h-11v-2z" fill="#fff" stroke="#777"/><rect x="0.5" y="18" width="11" height="8" fill="#fff" stroke="#777"/></svg>
<svg style="left:1641px;top:150px;" width="13" height="11" viewBox="0 0 13 11"><path d="M6 0.5L11.5 5.5v5h-11v-5z" fill="#fff" stroke="#777"/></svg>
<div style="left:797px;top:166px;width:1px;height:660.01px;background:#000"></div>
<div style="left:865px;top:166px;width:1px;height:660.01px;background:#000"></div>
<div style="left:1009px;top:166px;width:1px;height:660.01px;background:#000"></div>
<div style="left:1153px;top:166px;width:1px;height:660.01px;background:#000"></div>
<div style="left:1297px;top:166px;width:1px;height:660.01px;background:#000"></div>
<div style="left:1464px;top:166px;width:1px;height:660.01px;background:#000"></div>
<div style="left:797px;top:184px;width:668px;height:1px;background:#000"></div>
<div style="left:797px;top:212px;width:668px;height:1px;background:#000"></div>
<div style="left:797px;top:240px;width:668px;height:1px;background:#000"></div>
<div style="left:797px;top:268px;width:668px;height:1px;background:#000"></div>
<div style="left:797px;top:295px;width:668px;height:1px;background:#000"></div>
<div style="left:797px;top:323px;width:668px;height:1px;background:#000"></div>
<div style="left:797px;top:351px;width:668px;height:1px;background:#000"></div>
<div style="left:797px;top:379px;width:668px;height:1px;background:#000"></div>
<div style="left:797px;top:407px;width:668px;height:1px;background:#000"></div>
<div style="left:797px;top:435px;width:668px;height:1px;background:#000"></div>
<div style="left:797px;top:463px;width:668px;height:1px;background:#000"></div>
<div style="left:797px;top:491px;width:668px;height:1px;background:#000"></div>
<div style="left:797px;top:518px;width:668px;height:1px;background:#000"></div>
<div style="left:797px;top:546px;width:668px;height:1px;background:#000"></div>
<div style="left:797px;top:574px;width:668px;height:1px;background:#000"></div>
<div style="left:797px;top:602px;width:668px;height:1px;background:#000"></div>
<div style="left:797px;top:630px;width:668px;height:1px;background:#000"></div>
<div style="left:797px;top:658px;width:668px;height:1px;background:#000"></div>
<div style="left:797px;top:686px;width:668px;height:1px;background:#000"></div>
<div style="left:797px;top:714px;width:668px;height:1px;background:#000"></div>
<div style="left:797px;top:741px;width:668px;height:1px;background:#000"></div>
<div style="left:797px;top:769px;width:668px;height:1px;background:#000"></div>
<div style="left:797px;top:797px;width:668px;height:1px;background:#000"></div>
<div style="left:797px;top:825px;width:668px;height:1px;background:#000"></div>
<div class="t lr" style="top:162.02px;font-size:15.4px;line-height:20px;color:#000;left:815px;">8<span class=p><span style="position:relative;top:.5em;left:.12em">`</span></span></div>
<svg style="left:848px;top:166.87px" width="9" height="9.5" viewBox="0 0 12 11" preserveAspectRatio="none"><use href="#rt"/></svg>
<div class="t lr" style="top:162px;font-size:15px;line-height:20px;color:#000;left:923px;"><span class=c>刘丛</span></div>
<svg style="left:954px;top:166.87px" width="9" height="9.5" viewBox="0 0 12 11" preserveAspectRatio="none"><use href="#rt"/></svg>
<svg style="left:923px;top:178.37px;" width="32" height="4" viewBox="0 0 32 4"><path d="M0 1.5l1.5 1.5l1.5 -1.5l1.5 1.5l1.5 -1.5l1.5 1.5l1.5 -1.5l1.5 1.5l1.5 -1.5l1.5 1.5l1.5 -1.5l1.5 1.5l1.5 -1.5l1.5 1.5l1.5 -1.5l1.5 1.5l1.5 -1.5l1.5 1.5l1.5 -1.5l1.5 1.5l1.5 -1.5" fill="none" stroke="#3b6fd8" stroke-width="0.9"/></svg>
<div class="t lr" style="top:162px;font-size:15px;line-height:20px;color:#000;left:1075px;"><span class=c>女</span></div>
<svg style="left:1090px;top:166.87px" width="9" height="9.5" viewBox="0 0 12 11" preserveAspectRatio="none"><use href="#rt"/></svg>
<div class="t lr" style="top:161.56px;font-size:15.4px;line-height:20px;color:#000;left:1217.6px;">38</div>
<svg style="left:1234px;top:166.87px" width="9" height="9.5" viewBox="0 0 12 11" preserveAspectRatio="none"><use href="#rt"/></svg>
<div class="t lr" style="top:161.56px;font-size:15.4px;line-height:20px;color:#000;left:1311.6px;">211121198701232829</div>
<svg style="left:1452px;top:166.87px" width="9" height="9.5" viewBox="0 0 12 11" preserveAspectRatio="none"><use href="#rt"/></svg>
<svg style="left:1467px;top:159.13px" width="9" height="9.5" viewBox="0 0 12 11" preserveAspectRatio="none"><use href="#rt"/></svg>
<div class="t lr" style="top:189.89px;font-size:15.4px;line-height:20px;color:#000;left:815px;">9<span class=p><span style="position:relative;top:.5em;left:.12em">`</span></span></div>
<svg style="left:848px;top:194.74px" width="9" height="9.5" viewBox="0 0 12 11" preserveAspectRatio="none"><use href="#rt"/></svg>
<div class="t lr" style="top:189.87px;font-size:15px;line-height:20px;color:#000;left:915.5px;"><span class=c>孟凡静</span></div>
<svg style="left:961.5px;top:194.74px" width="9" height="9.5" viewBox="0 0 12 11" preserveAspectRatio="none"><use href="#rt"/></svg>
<svg style="left:915.5px;top:206.24px;" width="47" height="4" viewBox="0 0 47 4"><path d="M0 1.5l1.5 1.5l1.5 -1.5l1.5 1.5l1.5 -1.5l1.5 1.5l1.5 -1.5l1.5 1.5l1.5 -1.5l1.5 1.5l1.5 -1.5l1.5 1.5l1.5 -1.5l1.5 1.5l1.5 -1.5l1.5 1.5l1.5 -1.5l1.5 1.5l1.5 -1.5l1.5 1.5l1.5 -1.5l1.5 1.5l1.5 -1.5l1.5 1.5l1.5 -1.5l1.5 1.5l1.5 -1.5l1.5 1.5l1.5 -1.5l1.5 1.5l1.5 -1.5" fill="none" stroke="#3b6fd8" stroke-width="0.9"/></svg>
<div class="t lr" style="top:189.87px;font-size:15px;line-height:20px;color:#000;left:1075px;"><span class=c>女</span></div>
<svg style="left:1090px;top:194.74px" width="9" height="9.5" viewBox="0 0 12 11" preserveAspectRatio="none"><use href="#rt"/></svg>
<div class="t lr" style="top:189.43px;font-size:15.4px;line-height:20px;color:#000;left:1217.6px;">49</div>
<svg style="left:1234px;top:194.74px" width="9" height="9.5" viewBox="0 0 12 11" preserveAspectRatio="none"><use href="#rt"/></svg>
<div class="t lr" style="top:189.43px;font-size:15.4px;line-height:20px;color:#000;left:1311.6px;">211121197612191629</div>
<svg style="left:1452px;top:194.74px" width="9" height="9.5" viewBox="0 0 12 11" preserveAspectRatio="none"><use href="#rt"/></svg>
<svg style="left:1467px;top:187px" width="9" height="9.5" viewBox="0 0 12 11" preserveAspectRatio="none"><use href="#rt"/></svg>
<div class="t lr" style="top:217.76px;font-size:15.4px;line-height:20px;color:#000;left:815px;">10<span class=p><span style="position:relative;top:.5em;left:.12em">`</span></span></div>
<svg style="left:848px;top:222.61px" width="9" height="9.5" viewBox="0 0 12 11" preserveAspectRatio="none"><use href="#rt"/></svg>
<div class="t lr" style="top:217.74px;font-size:15px;line-height:20px;color:#000;left:923px;"><span class=c>张俊</span></div>
<svg style="left:954px;top:222.61px" width="9" height="9.5" viewBox="0 0 12 11" preserveAspectRatio="none"><use href="#rt"/></svg>
<div class="t lr" style="top:217.74px;font-size:15px;line-height:20px;color:#000;left:1075px;"><span class=c>男</span></div>
<svg style="left:1090px;top:222.61px" width="9" height="9.5" viewBox="0 0 12 11" preserveAspectRatio="none"><use href="#rt"/></svg>
<div class="t lr" style="top:217.3px;font-size:15.4px;line-height:20px;color:#000;left:1217.6px;">49</div>
<svg style="left:1234px;top:222.61px" width="9" height="9.5" viewBox="0 0 12 11" preserveAspectRatio="none"><use href="#rt"/></svg>
<div class="t lr" style="top:217.3px;font-size:15.4px;line-height:20px;color:#000;left:1311.6px;">211103197604151333</div>
<svg style="left:1452px;top:222.61px" width="9" height="9.5" viewBox="0 0 12 11" preserveAspectRatio="none"><use href="#rt"/></svg>
<svg style="left:1467px;top:214.87px" width="9" height="9.5" viewBox="0 0 12 11" preserveAspectRatio="none"><use href="#rt"/></svg>
<div class="t lr" style="top:245.63px;font-size:15.4px;line-height:20px;color:#000;left:815px;">11<span class=p><span style="position:relative;top:.5em;left:.12em">`</span></span></div>
<svg style="left:848px;top:250.48px" width="9" height="9.5" viewBox="0 0 12 11" preserveAspectRatio="none"><use href="#rt"/></svg>
<div class="t lr" style="top:245.61px;font-size:15px;line-height:20px;color:#000;left:915.5px;"><span class=c>王艳宁</span></div>
<svg style="left:961.5px;top:250.48px" width="9" height="9.5" viewBox="0 0 12 11" preserveAspectRatio="none"><use href="#rt"/></svg>
<svg style="left:915.5px;top:261.98px;" width="47" height="4" viewBox="0 0 47 4"><path d="M0 1.5l1.5 1.5l1.5 -1.5l1.5 1.5l1.5 -1.5l1.5 1.5l1.5 -1.5l1.5 1.5l1.5 -1.5l1.5 1.5l1.5 -1.5l1.5 1.5l1.5 -1.5l1.5 1.5l1.5 -1.5l1.5 1.5l1.5 -1.5l1.5 1.5l1.5 -1.5l1.5 1.5l1.5 -1.5l1.5 1.5l1.5 -1.5l1.5 1.5l1.5 -1.5l1.5 1.5l1.5 -1.5l1.5 1.5l1.5 -1.5l1.5 1.5l1.5 -1.5" fill="none" stroke="#3b6fd8" stroke-width="0.9"/></svg>
<div class="t lr" style="top:245.61px;font-size:15px;line-height:20px;color:#000;left:1075px;"><span class=c>女</span></div>
<svg style="left:1090px;top:250.48px" width="9" height="9.5" viewBox="0 0 12 11" preserveAspectRatio="none"><use href="#rt"/></svg>
<div class="t lr" style="top:245.17px;font-size:15.4px;line-height:20px;color:#000;left:1217.6px;">42</div>
<svg style="left:1234px;top:250.48px" width="9" height="9.5" viewBox="0 0 12 11" preserveAspectRatio="none"><use href="#rt"/></svg>
<div class="t lr" style="top:245.17px;font-size:15.4px;line-height:20px;color:#000;left:1311.6px;">13062519831004374x</div>
<svg style="left:1452px;top:250.48px" width="9" height="9.5" viewBox="0 0 12 11" preserveAspectRatio="none"><use href="#rt"/></svg>
<svg style="left:1467px;top:242.74px" width="9" height="9.5" viewBox="0 0 12 11" preserveAspectRatio="none"><use href="#rt"/></svg>
<div class="t lr" style="top:273.5px;font-size:15.4px;line-height:20px;color:#000;left:815px;">12<span class=p><span style="position:relative;top:.5em;left:.12em">`</span></span></div>
<svg style="left:848px;top:278.35px" width="9" height="9.5" viewBox="0 0 12 11" preserveAspectRatio="none"><use href="#rt"/></svg>
<div class="t lr" style="top:273.48px;font-size:15px;line-height:20px;color:#000;left:915.5px;"><span class=c>刘兴华</span></div>
<svg style="left:961.5px;top:278.35px" width="9" height="9.5" viewBox="0 0 12 11" preserveAspectRatio="none"><use href="#rt"/></svg>
<div class="t lr" style="top:273.48px;font-size:15px;line-height:20px;color:#000;left:1075px;"><span class=c>女</span></div>
<svg style="left:1090px;top:278.35px" width="9" height="9.5" viewBox="0 0 12 11" preserveAspectRatio="none"><use href="#rt"/></svg>
<div class="t lr" style="top:273.04px;font-size:15.4px;line-height:20px;color:#000;left:1217.6px;">40</div>
<svg style="left:1234px;top:278.35px" width="9" height="9.5" viewBox="0 0 12 11" preserveAspectRatio="none"><use href="#rt"/></svg>
<div class="t lr" style="top:273.04px;font-size:15.4px;line-height:20px;color:#000;left:1311.6px;">15042919850330094x</div>
<svg style="left:1452px;top:278.35px" width="9" height="9.5" viewBox="0 0 12 11" preserveAspectRatio="none"><use href="#rt"/></svg>
<svg style="left:1467px;top:270.61px" width="9" height="9.5" viewBox="0 0 12 11" preserveAspectRatio="none"><use href="#rt"/></svg>
<div class="t lr" style="top:301.37px;font-size:15.4px;line-height:20px;color:#000;left:815px;">13<span class=p><span style="position:relative;top:.5em;left:.12em">`</span></span></div>
<svg style="left:848px;top:306.22px" width="9" height="9.5" viewBox="0 0 12 11" preserveAspectRatio="none"><use href="#rt"/></svg>
<div class="t lr" style="top:301.35px;font-size:15px;line-height:20px;color:#000;left:923px;"><span class=c>高飞</span></div>
<svg style="left:954px;top:306.22px" width="9" height="9.5" viewBox="0 0 12 11" preserveAspectRatio="none"><use href="#rt"/></svg>
<div class="t lr" style="top:301.35px;font-size:15px;line-height:20px;color:#000;left:1075px;"><span class=c>女</span></div>
<svg style="left:1090px;top:306.22px" width="9" height="9.5" viewBox="0 0 12 11" preserveAspectRatio="none"><use href="#rt"/></svg>
<div class="t lr" style="top:300.91px;font-size:15.4px;line-height:20px;color:#000;left:1217.6px;">33</div>
<svg style="left:1234px;top:306.22px" width="9" height="9.5" viewBox="0 0 12 11" preserveAspectRatio="none"><use href="#rt"/></svg>
<div class="t lr" style="top:300.91px;font-size:15.4px;line-height:20px;color:#000;left:1311.6px;">211121199203272646</div>
<svg style="left:1452px;top:306.22px" width="9" height="9.5" viewBox="0 0 12 11" preserveAspectRatio="none"><use href="#rt"/></svg>
<svg style="left:1467px;top:298.48px" width="9" height="9.5" viewBox="0 0 12 11" preserveAspectRatio="none"><use href="#rt"/></svg>
<div class="t lr" style="top:329.24px;font-size:15.4px;line-height:20px;color:#000;left:815px;">14<span class=p><span style="position:relative;top:.5em;left:.12em">`</span></span></div>
<svg style="left:848px;top:334.09px" width="9" height="9.5" viewBox="0 0 12 11" preserveAspectRatio="none"><use href="#rt"/></svg>
<div class="t lr" style="top:329.22px;font-size:15px;line-height:20px;color:#000;left:923px;"><span class=c>武跃</span></div>
<svg style="left:954px;top:334.09px" width="9" height="9.5" viewBox="0 0 12 11" preserveAspectRatio="none"><use href="#rt"/></svg>
<div class="t lr" style="top:329.22px;font-size:15px;line-height:20px;color:#000;left:1075px;"><span class=c>女</span></div>
<svg style="left:1090px;top:334.09px" width="9" height="9.5" viewBox="0 0 12 11" preserveAspectRatio="none"><use href="#rt"/></svg>
<div class="t lr" style="top:328.78px;font-size:15.4px;line-height:20px;color:#000;left:1217.6px;">36</div>
<svg style="left:1234px;top:334.09px" width="9" height="9.5" viewBox="0 0 12 11" preserveAspectRatio="none"><use href="#rt"/></svg>
<div class="t lr" style="top:328.78px;font-size:15.4px;line-height:20px;color:#000;left:1311.6px;">211121198904302428</div>
<svg style="left:1452px;top:334.09px" width="9" height="9.5" viewBox="0 0 12 11" preserveAspectRatio="none"><use href="#rt"/></svg>
<svg style="left:1467px;top:326.35px" width="9" height="9.5" viewBox="0 0 12 11" preserveAspectRatio="none"><use href="#rt"/></svg>
<div class="t lr" style="top:357.11px;font-size:15.4px;line-height:20px;color:#000;left:815px;">15<span class=p><span style="position:relative;top:.5em;left:.12em">`</span></span></div>
<svg style="left:848px;top:361.96px" width="9" height="9.5" viewBox="0 0 12 11" preserveAspectRatio="none"><use href="#rt"/></svg>
<div class="t lr" style="top:357.09px;font-size:15px;line-height:20px;color:#000;left:923px;"><span class=c>田苗</span></div>
<svg style="left:954px;top:361.96px" width="9" height="9.5" viewBox="0 0 12 11" preserveAspectRatio="none"><use href="#rt"/></svg>
<div class="t lr" style="top:357.09px;font-size:15px;line-height:20px;color:#000;left:1075px;"><span class=c>女</span></div>
<svg style="left:1090px;top:361.96px" width="9" height="9.5" viewBox="0 0 12 11" preserveAspectRatio="none"><use href="#rt"/></svg>
<div class="t lr" style="top:356.65px;font-size:15.4px;line-height:20px;color:#000;left:1217.6px;">34</div>
<svg style="left:1234px;top:361.96px" width="9" height="9.5" viewBox="0 0 12 11" preserveAspectRatio="none"><use href="#rt"/></svg>
<div class="t lr" style="top:356.65px;font-size:15.4px;line-height:20px;color:#000;left:1311.6px;">211121199110232629</div>
<svg style="left:1452px;top:361.96px" width="9" height="9.5" viewBox="0 0 12 11" preserveAspectRatio="none"><use href="#rt"/></svg>
<svg style="left:1467px;top:354.22px" width="9" height="9.5" viewBox="0 0 12 11" preserveAspectRatio="none"><use href="#rt"/></svg>
<div class="t lr" style="top:384.98px;font-size:15.4px;line-height:20px;color:#000;left:815px;">16<span class=p><span style="position:relative;top:.5em;left:.12em">`</span></span></div>
<svg style="left:848px;top:389.83px" width="9" height="9.5" viewBox="0 0 12 11" preserveAspectRatio="none"><use href="#rt"/></svg>
<div class="t lr" style="top:384.96px;font-size:15px;line-height:20px;color:#000;left:923px;"><span class=c>惠茹</span></div>
<svg style="left:954px;top:389.83px" width="9" height="9.5" viewBox="0 0 12 11" preserveAspectRatio="none"><use href="#rt"/></svg>
<div class="t lr" style="top:384.96px;font-size:15px;line-height:20px;color:#000;left:1075px;"><span class=c>女</span></div>
<svg style="left:1090px;top:389.83px" width="9" height="9.5" viewBox="0 0 12 11" preserveAspectRatio="none"><use href="#rt"/></svg>
<div class="t lr" style="top:384.52px;font-size:15.4px;line-height:20px;color:#000;left:1217.6px;">38</div>
<svg style="left:1234px;top:389.83px" width="9" height="9.5" viewBox="0 0 12 11" preserveAspectRatio="none"><use href="#rt"/></svg>
<div class="t lr" style="top:384.52px;font-size:15.4px;line-height:20px;color:#000;left:1311.6px;">230521198710224828</div>
<svg style="left:1452px;top:389.83px" width="9" height="9.5" viewBox="0 0 12 11" preserveAspectRatio="none"><use href="#rt"/></svg>
<svg style="left:1467px;top:382.09px" width="9" height="9.5" viewBox="0 0 12 11" preserveAspectRatio="none"><use href="#rt"/></svg>
<div class="t lr" style="top:412.85px;font-size:15.4px;line-height:20px;color:#000;left:815px;">17<span class=p><span style="position:relative;top:.5em;left:.12em">`</span></span></div>
<svg style="left:848px;top:417.7px" width="9" height="9.5" viewBox="0 0 12 11" preserveAspectRatio="none"><use href="#rt"/></svg>
<div class="t lr" style="top:412.83px;font-size:15px;line-height:20px;color:#000;left:923px;"><span class=c>金跃</span></div>
<svg style="left:954px;top:417.7px" width="9" height="9.5" viewBox="0 0 12 11" preserveAspectRatio="none"><use href="#rt"/></svg>
<div class="t lr" style="top:412.83px;font-size:15px;line-height:20px;color:#000;left:1075px;"><span class=c>女</span></div>
<svg style="left:1090px;top:417.7px" width="9" height="9.5" viewBox="0 0 12 11" preserveAspectRatio="none"><use href="#rt"/></svg>
<div class="t lr" style="top:412.39px;font-size:15.4px;line-height:20px;color:#000;left:1217.6px;">37</div>
<svg style="left:1234px;top:417.7px" width="9" height="9.5" viewBox="0 0 12 11" preserveAspectRatio="none"><use href="#rt"/></svg>
<div class="t lr" style="top:412.39px;font-size:15.4px;line-height:20px;color:#000;left:1311.6px;">211102198807290526</div>
<svg style="left:1452px;top:417.7px" width="9" height="9.5" viewBox="0 0 12 11" preserveAspectRatio="none"><use href="#rt"/></svg>
<svg style="left:1467px;top:409.96px" width="9" height="9.5" viewBox="0 0 12 11" preserveAspectRatio="none"><use href="#rt"/></svg>
<div class="t lr" style="top:440.72px;font-size:15.4px;line-height:20px;color:#000;left:815px;">18<span class=p><span style="position:relative;top:.5em;left:.12em">`</span></span></div>
<svg style="left:848px;top:445.57px" width="9" height="9.5" viewBox="0 0 12 11" preserveAspectRatio="none"><use href="#rt"/></svg>
<div class="t lr" style="top:440.7px;font-size:15px;line-height:20px;color:#000;left:915.5px;"><span class=c>王久贵</span></div>
<svg style="left:961.5px;top:445.57px" width="9" height="9.5" viewBox="0 0 12 11" preserveAspectRatio="none"><use href="#rt"/></svg>
<svg style="left:915.5px;top:457.07px;" width="47" height="4" viewBox="0 0 47 4"><path d="M0 1.5l1.5 1.5l1.5 -1.5l1.5 1.5l1.5 -1.5l1.5 1.5l1.5 -1.5l1.5 1.5l1.5 -1.5l1.5 1.5l1.5 -1.5l1.5 1.5l1.5 -1.5l1.5 1.5l1.5 -1.5l1.5 1.5l1.5 -1.5l1.5 1.5l1.5 -1.5l1.5 1.5l1.5 -1.5l1.5 1.5l1.5 -1.5l1.5 1.5l1.5 -1.5l1.5 1.5l1.5 -1.5l1.5 1.5l1.5 -1.5l1.5 1.5l1.5 -1.5" fill="none" stroke="#3b6fd8" stroke-width="0.9"/></svg>
<div class="t lr" style="top:440.7px;font-size:15px;line-height:20px;color:#000;left:1075px;"><span class=c>男</span></div>
<svg style="left:1090px;top:445.57px" width="9" height="9.5" viewBox="0 0 12 11" preserveAspectRatio="none"><use href="#rt"/></svg>
<div class="t lr" style="top:440.26px;font-size:15.4px;line-height:20px;color:#000;left:1217.6px;">50</div>
<svg style="left:1234px;top:445.57px" width="9" height="9.5" viewBox="0 0 12 11" preserveAspectRatio="none"><use href="#rt"/></svg>
<div class="t lr" style="top:440.26px;font-size:15.4px;line-height:20px;color:#000;left:1311.6px;">211103197501031515</div>
<svg style="left:1452px;top:445.57px" width="9" height="9.5" viewBox="0 0 12 11" preserveAspectRatio="none"><use href="#rt"/></svg>
<svg style="left:1467px;top:437.83px" width="9" height="9.5" viewBox="0 0 12 11" preserveAspectRatio="none"><use href="#rt"/></svg>
<div class="t lr" style="top:468.59px;font-size:15.4px;line-height:20px;color:#000;left:815px;">19<span class=p><span style="position:relative;top:.5em;left:.12em">`</span></span></div>
<svg style="left:848px;top:473.44px" width="9" height="9.5" viewBox="0 0 12 11" preserveAspectRatio="none"><use href="#rt"/></svg>
<div class="t lr" style="top:468.57px;font-size:15px;line-height:20px;color:#000;left:915.5px;"><span class=c>王宇平</span></div>
<svg style="left:961.5px;top:473.44px" width="9" height="9.5" viewBox="0 0 12 11" preserveAspectRatio="none"><use href="#rt"/></svg>
<div class="t lr" style="top:468.57px;font-size:15px;line-height:20px;color:#000;left:1075px;"><span class=c>男</span></div>
<svg style="left:1090px;top:473.44px" width="9" height="9.5" viewBox="0 0 12 11" preserveAspectRatio="none"><use href="#rt"/></svg>
<div class="t lr" style="top:468.13px;font-size:15.4px;line-height:20px;color:#000;left:1217.6px;">59</div>
<svg style="left:1234px;top:473.44px" width="9" height="9.5" viewBox="0 0 12 11" preserveAspectRatio="none"><use href="#rt"/></svg>
<div class="t lr" style="top:468.13px;font-size:15.4px;line-height:20px;color:#000;left:1311.6px;">211103196605061511</div>
<svg style="left:1452px;top:473.44px" width="9" height="9.5" viewBox="0 0 12 11" preserveAspectRatio="none"><use href="#rt"/></svg>
<svg style="left:1467px;top:465.7px" width="9" height="9.5" viewBox="0 0 12 11" preserveAspectRatio="none"><use href="#rt"/></svg>
<div class="t lr" style="top:496.46px;font-size:15.4px;line-height:20px;color:#000;left:815px;">20<span class=p><span style="position:relative;top:.5em;left:.12em">`</span></span></div>
<svg style="left:848px;top:501.31px" width="9" height="9.5" viewBox="0 0 12 11" preserveAspectRatio="none"><use href="#rt"/></svg>
<div class="t lr" style="top:496.44px;font-size:15px;line-height:20px;color:#000;left:915.5px;"><span class=c>张卫星</span></div>
<svg style="left:961.5px;top:501.31px" width="9" height="9.5" viewBox="0 0 12 11" preserveAspectRatio="none"><use href="#rt"/></svg>
<div class="t lr" style="top:496.44px;font-size:15px;line-height:20px;color:#000;left:1075px;"><span class=c>男</span></div>
<svg style="left:1090px;top:501.31px" width="9" height="9.5" viewBox="0 0 12 11" preserveAspectRatio="none"><use href="#rt"/></svg>
<div class="t lr" style="top:496px;font-size:15.4px;line-height:20px;color:#000;left:1217.6px;">67</div>
<svg style="left:1234px;top:501.31px" width="9" height="9.5" viewBox="0 0 12 11" preserveAspectRatio="none"><use href="#rt"/></svg>
<div class="t lr" style="top:496px;font-size:15.4px;line-height:20px;color:#000;left:1311.6px;">211103195804202116</div>
<svg style="left:1452px;top:501.31px" width="9" height="9.5" viewBox="0 0 12 11" preserveAspectRatio="none"><use href="#rt"/></svg>
<svg style="left:1467px;top:493.57px" width="9" height="9.5" viewBox="0 0 12 11" preserveAspectRatio="none"><use href="#rt"/></svg>
<div class="t lr" style="top:524.33px;font-size:15.4px;line-height:20px;color:#000;left:815px;">21<span class=p><span style="position:relative;top:.5em;left:.12em">`</span></span></div>
<svg style="left:848px;top:529.17px" width="9" height="9.5" viewBox="0 0 12 11" preserveAspectRatio="none"><use href="#rt"/></svg>
<div class="t lr" style="top:524.31px;font-size:15px;line-height:20px;color:#000;left:915.5px;"><span class=c>张建军</span></div>
<svg style="left:961.5px;top:529.17px" width="9" height="9.5" viewBox="0 0 12 11" preserveAspectRatio="none"><use href="#rt"/></svg>
<div class="t lr" style="top:524.31px;font-size:15px;line-height:20px;color:#000;left:1075px;"><span class=c>男</span></div>
<svg style="left:1090px;top:529.17px" width="9" height="9.5" viewBox="0 0 12 11" preserveAspectRatio="none"><use href="#rt"/></svg>
<div class="t lr" style="top:523.87px;font-size:15.4px;line-height:20px;color:#000;left:1217.6px;">61</div>
<svg style="left:1234px;top:529.17px" width="9" height="9.5" viewBox="0 0 12 11" preserveAspectRatio="none"><use href="#rt"/></svg>
<div class="t lr" style="top:523.87px;font-size:15.4px;line-height:20px;color:#000;left:1311.6px;">211121196402012659</div>
<svg style="left:1452px;top:529.17px" width="9" height="9.5" viewBox="0 0 12 11" preserveAspectRatio="none"><use href="#rt"/></svg>
<svg style="left:1467px;top:521.44px" width="9" height="9.5" viewBox="0 0 12 11" preserveAspectRatio="none"><use href="#rt"/></svg>
<div class="t lr" style="top:552.2px;font-size:15.4px;line-height:20px;color:#000;left:815px;">22<span class=p><span style="position:relative;top:.5em;left:.12em">`</span></span></div>
<svg style="left:848px;top:557.04px" width="9" height="9.5" viewBox="0 0 12 11" preserveAspectRatio="none"><use href="#rt"/></svg>
<div class="t lr" style="top:552.18px;font-size:15px;line-height:20px;color:#000;left:915.5px;"><span class=c>何润华</span></div>
<svg style="left:961.5px;top:557.04px" width="9" height="9.5" viewBox="0 0 12 11" preserveAspectRatio="none"><use href="#rt"/></svg>
<div class="t lr" style="top:552.18px;font-size:15px;line-height:20px;color:#000;left:1075px;"><span class=c>女</span></div>
<svg style="left:1090px;top:557.04px" width="9" height="9.5" viewBox="0 0 12 11" preserveAspectRatio="none"><use href="#rt"/></svg>
<div class="t lr" style="top:551.74px;font-size:15.4px;line-height:20px;color:#000;left:1217.6px;">59</div>
<svg style="left:1234px;top:557.04px" width="9" height="9.5" viewBox="0 0 12 11" preserveAspectRatio="none"><use href="#rt"/></svg>
<div class="t lr" style="top:551.74px;font-size:15.4px;line-height:20px;color:#000;left:1311.6px;">211103196610030963</div>
<svg style="left:1452px;top:557.04px" width="9" height="9.5" viewBox="0 0 12 11" preserveAspectRatio="none"><use href="#rt"/></svg>
<svg style="left:1467px;top:549.31px" width="9" height="9.5" viewBox="0 0 12 11" preserveAspectRatio="none"><use href="#rt"/></svg>
<div class="t lr" style="top:580.07px;font-size:15.4px;line-height:20px;color:#000;left:815px;">23<span class=p><span style="position:relative;top:.5em;left:.12em">`</span></span></div>
<svg style="left:848px;top:584.91px" width="9" height="9.5" viewBox="0 0 12 11" preserveAspectRatio="none"><use href="#rt"/></svg>
<div class="t lr" style="top:580.05px;font-size:15px;line-height:20px;color:#000;left:923px;"><span class=c>梁磊</span></div>
<svg style="left:954px;top:584.91px" width="9" height="9.5" viewBox="0 0 12 11" preserveAspectRatio="none"><use href="#rt"/></svg>
<div class="t lr" style="top:580.05px;font-size:15px;line-height:20px;color:#000;left:1075px;"><span class=c>男</span></div>
<svg style="left:1090px;top:584.91px" width="9" height="9.5" viewBox="0 0 12 11" preserveAspectRatio="none"><use href="#rt"/></svg>
<div class="t lr" style="top:579.61px;font-size:15.4px;line-height:20px;color:#000;left:1217.6px;">48</div>
<svg style="left:1234px;top:584.91px" width="9" height="9.5" viewBox="0 0 12 11" preserveAspectRatio="none"><use href="#rt"/></svg>
<div class="t lr" style="top:579.61px;font-size:15.4px;line-height:20px;color:#000;left:1311.6px;">211103197712203735</div>
<svg style="left:1452px;top:584.91px" width="9" height="9.5" viewBox="0 0 12 11" preserveAspectRatio="none"><use href="#rt"/></svg>
<svg style="left:1467px;top:577.18px" width="9" height="9.5" viewBox="0 0 12 11" preserveAspectRatio="none"><use href="#rt"/></svg>
<div class="t lr" style="top:607.94px;font-size:15.4px;line-height:20px;color:#000;left:815px;">24<span class=p><span style="position:relative;top:.5em;left:.12em">`</span></span></div>
<svg style="left:848px;top:612.78px" width="9" height="9.5" viewBox="0 0 12 11" preserveAspectRatio="none"><use href="#rt"/></svg>
<div class="t lr" style="top:607.92px;font-size:15px;line-height:20px;color:#000;left:923px;"><span class=c>周建</span></div>
<svg style="left:954px;top:612.78px" width="9" height="9.5" viewBox="0 0 12 11" preserveAspectRatio="none"><use href="#rt"/></svg>
<div class="t lr" style="top:607.92px;font-size:15px;line-height:20px;color:#000;left:1075px;"><span class=c>男</span></div>
<svg style="left:1090px;top:612.78px" width="9" height="9.5" viewBox="0 0 12 11" preserveAspectRatio="none"><use href="#rt"/></svg>
<div class="t lr" style="top:607.48px;font-size:15.4px;line-height:20px;color:#000;left:1217.6px;">47</div>
<svg style="left:1234px;top:612.78px" width="9" height="9.5" viewBox="0 0 12 11" preserveAspectRatio="none"><use href="#rt"/></svg>
<div class="t lr" style="top:607.48px;font-size:15.4px;line-height:20px;color:#000;left:1311.6px;">211103197811183717</div>
<svg style="left:1452px;top:612.78px" width="9" height="9.5" viewBox="0 0 12 11" preserveAspectRatio="none"><use href="#rt"/></svg>
<svg style="left:1467px;top:605.05px" width="9" height="9.5" viewBox="0 0 12 11" preserveAspectRatio="none"><use href="#rt"/></svg>
<div class="t lr" style="top:635.81px;font-size:15.4px;line-height:20px;color:#000;left:815px;">25<span class=p><span style="position:relative;top:.5em;left:.12em">`</span></span></div>
<svg style="left:848px;top:640.65px" width="9" height="9.5" viewBox="0 0 12 11" preserveAspectRatio="none"><use href="#rt"/></svg>
<div class="t lr" style="top:635.79px;font-size:15px;line-height:20px;color:#000;left:915.5px;"><span class=c>郭晓燕</span></div>
<svg style="left:961.5px;top:640.65px" width="9" height="9.5" viewBox="0 0 12 11" preserveAspectRatio="none"><use href="#rt"/></svg>
<div class="t lr" style="top:635.79px;font-size:15px;line-height:20px;color:#000;left:1075px;"><span class=c>女</span></div>
<svg style="left:1090px;top:640.65px" width="9" height="9.5" viewBox="0 0 12 11" preserveAspectRatio="none"><use href="#rt"/></svg>
<div class="t lr" style="top:635.35px;font-size:15.4px;line-height:20px;color:#000;left:1217.6px;">50</div>
<svg style="left:1234px;top:640.65px" width="9" height="9.5" viewBox="0 0 12 11" preserveAspectRatio="none"><use href="#rt"/></svg>
<div class="t lr" style="top:635.35px;font-size:15.4px;line-height:20px;color:#000;left:1311.6px;">211103197502181945</div>
<svg style="left:1452px;top:640.65px" width="9" height="9.5" viewBox="0 0 12 11" preserveAspectRatio="none"><use href="#rt"/></svg>
<svg style="left:1467px;top:632.92px" width="9" height="9.5" viewBox="0 0 12 11" preserveAspectRatio="none"><use href="#rt"/></svg>
<div class="t lr" style="top:663.68px;font-size:15.4px;line-height:20px;color:#000;left:815px;">26<span class=p><span style="position:relative;top:.5em;left:.12em">`</span></span></div>
<svg style="left:848px;top:668.52px" width="9" height="9.5" viewBox="0 0 12 11" preserveAspectRatio="none"><use href="#rt"/></svg>
<div class="t lr" style="top:663.66px;font-size:15px;line-height:20px;color:#000;left:915.5px;"><span class=c>谢洪顺</span></div>
<svg style="left:961.5px;top:668.52px" width="9" height="9.5" viewBox="0 0 12 11" preserveAspectRatio="none"><use href="#rt"/></svg>
<div class="t lr" style="top:663.66px;font-size:15px;line-height:20px;color:#000;left:1075px;"><span class=c>男</span></div>
<svg style="left:1090px;top:668.52px" width="9" height="9.5" viewBox="0 0 12 11" preserveAspectRatio="none"><use href="#rt"/></svg>
<div class="t lr" style="top:663.22px;font-size:15.4px;line-height:20px;color:#000;left:1217.6px;">61</div>
<svg style="left:1234px;top:668.52px" width="9" height="9.5" viewBox="0 0 12 11" preserveAspectRatio="none"><use href="#rt"/></svg>
<div class="t lr" style="top:663.22px;font-size:15.4px;line-height:20px;color:#000;left:1311.6px;">211103196402193215</div>
<svg style="left:1452px;top:668.52px" width="9" height="9.5" viewBox="0 0 12 11" preserveAspectRatio="none"><use href="#rt"/></svg>
<svg style="left:1467px;top:660.79px" width="9" height="9.5" viewBox="0 0 12 11" preserveAspectRatio="none"><use href="#rt"/></svg>
<div class="t lr" style="top:691.55px;font-size:15.4px;line-height:20px;color:#000;left:815px;">27<span class=p><span style="position:relative;top:.5em;left:.12em">`</span></span></div>
<svg style="left:848px;top:696.39px" width="9" height="9.5" viewBox="0 0 12 11" preserveAspectRatio="none"><use href="#rt"/></svg>
<div class="t lr" style="top:691.53px;font-size:15px;line-height:20px;color:#000;left:915.5px;"><span class=c>沈海燕</span></div>
<svg style="left:961.5px;top:696.39px" width="9" height="9.5" viewBox="0 0 12 11" preserveAspectRatio="none"><use href="#rt"/></svg>
<div class="t lr" style="top:691.53px;font-size:15px;line-height:20px;color:#000;left:1075px;"><span class=c>女</span></div>
<svg style="left:1090px;top:696.39px" width="9" height="9.5" viewBox="0 0 12 11" preserveAspectRatio="none"><use href="#rt"/></svg>
<div class="t lr" style="top:691.09px;font-size:15.4px;line-height:20px;color:#000;left:1217.6px;">38</div>
<svg style="left:1234px;top:696.39px" width="9" height="9.5" viewBox="0 0 12 11" preserveAspectRatio="none"><use href="#rt"/></svg>
<div class="t lr" style="top:691.09px;font-size:15.4px;line-height:20px;color:#000;left:1311.6px;">500233198712035686</div>
<svg style="left:1452px;top:696.39px" width="9" height="9.5" viewBox="0 0 12 11" preserveAspectRatio="none"><use href="#rt"/></svg>
<svg style="left:1467px;top:688.66px" width="9" height="9.5" viewBox="0 0 12 11" preserveAspectRatio="none"><use href="#rt"/></svg>
<div class="t lr" style="top:719.42px;font-size:15.4px;line-height:20px;color:#000;left:815px;">28<span class=p><span style="position:relative;top:.5em;left:.12em">`</span></span></div>
<svg style="left:848px;top:724.26px" width="9" height="9.5" viewBox="0 0 12 11" preserveAspectRatio="none"><use href="#rt"/></svg>
<div class="t lr" style="top:719.4px;font-size:15px;line-height:20px;color:#000;left:915.5px;"><span class=c>徐文超</span></div>
<svg style="left:961.5px;top:724.26px" width="9" height="9.5" viewBox="0 0 12 11" preserveAspectRatio="none"><use href="#rt"/></svg>
<div class="t lr" style="top:719.4px;font-size:15px;line-height:20px;color:#000;left:1075px;"><span class=c>男</span></div>
<svg style="left:1090px;top:724.26px" width="9" height="9.5" viewBox="0 0 12 11" preserveAspectRatio="none"><use href="#rt"/></svg>
<div class="t lr" style="top:718.96px;font-size:15.4px;line-height:20px;color:#000;left:1217.6px;">39</div>
<svg style="left:1234px;top:724.26px" width="9" height="9.5" viewBox="0 0 12 11" preserveAspectRatio="none"><use href="#rt"/></svg>
<div class="t lr" style="top:718.96px;font-size:15.4px;line-height:20px;color:#000;left:1311.6px;">210623198612134919</div>
<svg style="left:1452px;top:724.26px" width="9" height="9.5" viewBox="0 0 12 11" preserveAspectRatio="none"><use href="#rt"/></svg>
<svg style="left:1467px;top:716.53px" width="9" height="9.5" viewBox="0 0 12 11" preserveAspectRatio="none"><use href="#rt"/></svg>
<div class="t lr" style="top:747.29px;font-size:15.4px;line-height:20px;color:#000;left:815px;">29<span class=p><span style="position:relative;top:.5em;left:.12em">`</span></span></div>
<svg style="left:848px;top:752.13px" width="9" height="9.5" viewBox="0 0 12 11" preserveAspectRatio="none"><use href="#rt"/></svg>
<div class="t lr" style="top:747.27px;font-size:15px;line-height:20px;color:#000;left:915.5px;"><span class=c>王丽华</span></div>
<svg style="left:961.5px;top:752.13px" width="9" height="9.5" viewBox="0 0 12 11" preserveAspectRatio="none"><use href="#rt"/></svg>
<div class="t lr" style="top:747.27px;font-size:15px;line-height:20px;color:#000;left:1075px;"><span class=c>女</span></div>
<svg style="left:1090px;top:752.13px" width="9" height="9.5" viewBox="0 0 12 11" preserveAspectRatio="none"><use href="#rt"/></svg>
<div class="t lr" style="top:746.83px;font-size:15.4px;line-height:20px;color:#000;left:1217.6px;">45</div>
<svg style="left:1234px;top:752.13px" width="9" height="9.5" viewBox="0 0 12 11" preserveAspectRatio="none"><use href="#rt"/></svg>
<div class="t lr" style="top:746.83px;font-size:15.4px;line-height:20px;color:#000;left:1311.6px;">211102198005201528</div>
<svg style="left:1452px;top:752.13px" width="9" height="9.5" viewBox="0 0 12 11" preserveAspectRatio="none"><use href="#rt"/></svg>
<svg style="left:1467px;top:744.4px" width="9" height="9.5" viewBox="0 0 12 11" preserveAspectRatio="none"><use href="#rt"/></svg>
<div class="t lr" style="top:775.16px;font-size:15.4px;line-height:20px;color:#000;left:815px;">30<span class=p><span style="position:relative;top:.5em;left:.12em">`</span></span></div>
<svg style="left:848px;top:780px" width="9" height="9.5" viewBox="0 0 12 11" preserveAspectRatio="none"><use href="#rt"/></svg>
<div class="t lr" style="top:775.14px;font-size:15px;line-height:20px;color:#000;left:915.5px;"><span class=c>张文慧</span></div>
<svg style="left:961.5px;top:780px" width="9" height="9.5" viewBox="0 0 12 11" preserveAspectRatio="none"><use href="#rt"/></svg>
<div class="t lr" style="top:775.14px;font-size:15px;line-height:20px;color:#000;left:1075px;"><span class=c>女</span></div>
<svg style="left:1090px;top:780px" width="9" height="9.5" viewBox="0 0 12 11" preserveAspectRatio="none"><use href="#rt"/></svg>
<div class="t lr" style="top:774.7px;font-size:15.4px;line-height:20px;color:#000;left:1217.6px;">32</div>
<svg style="left:1234px;top:780px" width="9" height="9.5" viewBox="0 0 12 11" preserveAspectRatio="none"><use href="#rt"/></svg>
<div class="t lr" style="top:774.7px;font-size:15.4px;line-height:20px;color:#000;left:1311.6px;">230321199305233609</div>
<svg style="left:1452px;top:780px" width="9" height="9.5" viewBox="0 0 12 11" preserveAspectRatio="none"><use href="#rt"/></svg>
<svg style="left:1467px;top:772.27px" width="9" height="9.5" viewBox="0 0 12 11" preserveAspectRatio="none"><use href="#rt"/></svg>
<div class="t lr" style="top:803.03px;font-size:15.4px;line-height:20px;color:#000;left:815px;">31<span class=p><span style="position:relative;top:.5em;left:.12em">`</span></span></div>
<svg style="left:848px;top:807.87px" width="9" height="9.5" viewBox="0 0 12 11" preserveAspectRatio="none"><use href="#rt"/></svg>
<div class="t lr" style="top:803.01px;font-size:15px;line-height:20px;color:#000;left:915.5px;"><span class=c>董晓杰</span></div>
<svg style="left:961.5px;top:807.87px" width="9" height="9.5" viewBox="0 0 12 11" preserveAspectRatio="none"><use href="#rt"/></svg>
<div class="t lr" style="top:803.01px;font-size:15px;line-height:20px;color:#000;left:1075px;"><span class=c>女</span></div>
<svg style="left:1090px;top:807.87px" width="9" height="9.5" viewBox="0 0 12 11" preserveAspectRatio="none"><use href="#rt"/></svg>
<div class="t lr" style="top:802.57px;font-size:15.4px;line-height:20px;color:#000;left:1217.6px;">39</div>
<svg style="left:1234px;top:807.87px" width="9" height="9.5" viewBox="0 0 12 11" preserveAspectRatio="none"><use href="#rt"/></svg>
<div class="t lr" style="top:802.57px;font-size:15.4px;line-height:20px;color:#000;left:1311.6px;">211122198611172646</div>
<svg style="left:1452px;top:807.87px" width="9" height="9.5" viewBox="0 0 12 11" preserveAspectRatio="none"><use href="#rt"/></svg>
<svg style="left:1467px;top:800.14px" width="9" height="9.5" viewBox="0 0 12 11" preserveAspectRatio="none"><use href="#rt"/></svg>
<svg style="left:1132px;top:834px" width="9" height="9.5" viewBox="0 0 12 11" preserveAspectRatio="none"><use href="#rt"/></svg>
<svg style="left:1132px;top:867px" width="9" height="9.5" viewBox="0 0 12 11" preserveAspectRatio="none"><use href="#rt"/></svg>
<div style="left:772px;top:886px;width:25px;height:1px;background:#a6a6a6"></div>
<div style="left:797px;top:886px;width:1px;height:26px;background:#a6a6a6"></div>
<div style="left:1466px;top:886px;width:26px;height:1px;background:#a6a6a6"></div>
<div style="left:1466px;top:886px;width:1px;height:26px;background:#a6a6a6"></div>
<div class="t lm" style="top:900.59px;font-size:13px;line-height:17px;color:#777;left:1100px;">201 / 522</div>
<svg style="left:1171px;top:903px" width="8" height="9" viewBox="0 0 12 11" preserveAspectRatio="none"><use href="#rt"/></svg>
</div>
<div class="w" style="left:1905px;width:1891px"><div style="left:15px;top:0;width:1920px;height:996px">
<div style="left:-30px;top:0px;width:1950px;height:41px;background:#2b579a"></div>
<div style="left:13px;top:0px;width:14px;height:1px;background:#fff"></div>
<div style="left:1671px;top:0px;width:45px;height:3px;background:#aabbd6"></div>
<div style="left:52px;top:11px;width:49px;height:30px;background:#f3f3f3"></div>
<div class="t ls" style="top:17.4px;font-size:12px;line-height:16px;color:#fff;left:8px;"><span class=c>文件</span></div>
<div class="t ls" style="top:17.4px;font-size:12px;line-height:16px;color:#2b579a;left:63px;"><span class=c>开始</span></div>
<div class="t ls" style="top:17.4px;font-size:12px;line-height:16px;color:#fff;left:115px;"><span class=c>插入</span></div>
<div class="t ls" style="top:17.4px;font-size:12px;line-height:16px;color:#fff;left:166px;"><span class=c>设计</span></div>
<div class="t ls" style="top:17.4px;font-size:12px;line-height:16px;color:#fff;left:216px;"><span class=c>布局</span></div>
<div class="t ls" style="top:17.4px;font-size:12px;line-height:16px;color:#fff;left:267px;"><span class=c>引用</span></div>
<div class="t ls" style="top:17.4px;font-size:12px;line-height:16px;color:#fff;left:319px;"><span class=c>邮件</span></div>
<div class="t ls" style="top:17.4px;font-size:12px;line-height:16px;color:#fff;left:370px;"><span class=c>审阅</span></div>
<div class="t ls" style="top:17.4px;font-size:12px;line-height:16px;color:#fff;left:420.5px;"><span class=c>视图</span></div>
<div class="t ls" style="top:17.4px;font-size:12px;line-height:16px;color:#fff;left:471.5px;"><span class=c>帮助</span></div>
<div class="t ls" style="top:17.17px;font-size:12.5px;line-height:16px;color:#fff;left:522.6px;">Acrobat</div>
<svg style="left:598px;top:17px;" width="14" height="16" viewBox="0 0 14 16"><path d="M7 1.2a5 5 0 0 0-3 9c.8.7 1 1.3 1 2.3h4c0-1 .3-1.6 1-2.3a5 5 0 0 0-3-9z" fill="none" stroke="#fff" stroke-width="1.2"/><path d="M5 14.5h4" stroke="#fff" stroke-width="1.2"/></svg>
<div class="t ls" style="top:17.4px;font-size:12px;line-height:16px;color:#fff;left:625px;"><span class=c>操作说明搜索</span></div>
<div style="left:1835px;top:14px;width:64px;height:24px;border:1px solid #fff;box-sizing:border-box"></div>
<svg style="left:1840px;top:20px;" width="12" height="12" viewBox="0 0 12 12"><path d="M1 5v6h10V7" fill="none" stroke="#fff" stroke-width="1.2"/><path d="M3 9c0-3 2-5 6-5M7 2l2.5 2L7 6" fill="none" stroke="#fff" stroke-width="1.2"/></svg>
<div class="t ls" style="top:15.94px;font-size:13px;line-height:17px;color:#fff;left:1856px;font-weight:bold"><span class=c>共享</span></div>
<svg style="left:1888px;top:25px;" width="8" height="4" viewBox="0 0 8 4"><path d="M0.5 0.5L4 3.5L7.5 0.5" fill="none" stroke="#fff" stroke-width="1.1"/></svg>
<div style="left:-30px;top:41px;width:1950px;height:94px;background:#f3f3f3"></div>
<div style="left:-30px;top:135px;width:1950px;height:1px;background:#d8d8d8"></div>
<div style="left:113px;top:45px;width:1px;height:86px;background:#c6c6c6"></div>
<div style="left:457px;top:45px;width:1px;height:86px;background:#c6c6c6"></div>
<div style="left:749px;top:45px;width:1px;height:86px;background:#c6c6c6"></div>
<div style="left:1660px;top:45px;width:1px;height:86px;background:#c6c6c6"></div>
<div style="left:1753px;top:45px;width:1px;height:86px;background:#c6c6c6"></div>
<div style="left:1811px;top:45px;width:1px;height:86px;background:#c6c6c6"></div>
<div class="t ls" style="top:116.9px;font-size:12px;line-height:16px;color:#444;left:26px;"><span class=c>剪贴板</span></div>
<div class="t ls" style="top:116.9px;font-size:12px;line-height:16px;color:#444;left:265px;"><span class=c>字体</span></div>
<div class="t ls" style="top:116.9px;font-size:12px;line-height:16px;color:#444;left:583px;"><span class=c>段落</span></div>
<div class="t ls" style="top:116.9px;font-size:12px;line-height:16px;color:#444;left:1184px;"><span class=c>样式</span></div>
<div class="t ls" style="top:116.9px;font-size:12px;line-height:16px;color:#444;left:1695px;"><span class=c>编辑</span></div>
<div class="t ls" style="top:116.9px;font-size:12px;line-height:16px;color:#444;left:1764px;"><span class=c>加载项</span></div>
<svg style="left:101.5px;top:122.5px;" width="9" height="9" viewBox="0 0 9 9"><path d="M0.5 8.5V0.5H8.5" fill="none" stroke="#777" stroke-width="1"/><path d="M2.5 2.5L8 8M4 8.5H8.5V4" fill="none" stroke="#555" stroke-width="1"/></svg>
<svg style="left:446px;top:122.5px;" width="9" height="9" viewBox="0 0 9 9"><path d="M0.5 8.5V0.5H8.5" fill="none" stroke="#777" stroke-width="1"/><path d="M2.5 2.5L8 8M4 8.5H8.5V4" fill="none" stroke="#555" stroke-width="1"/></svg>
<svg style="left:738px;top:122.5px;" width="9" height="9" viewBox="0 0 9 9"><path d="M0.5 8.5V0.5H8.5" fill="none" stroke="#777" stroke-width="1"/><path d="M2.5 2.5L8 8M4 8.5H8.5V4" fill="none" stroke="#555" stroke-width="1"/></svg>
<svg style="left:1649px;top:122.5px;" width="9" height="9" viewBox="0 0 9 9"><path d="M0.5 8.5V0.5H8.5" fill="none" stroke="#777" stroke-width="1"/><path d="M2.5 2.5L8 8M4 8.5H8.5V4" fill="none" stroke="#555" stroke-width="1"/></svg>
<svg style="left:1892px;top:126px;" width="12" height="7" viewBox="0 0 12 7"><path d="M1 6L6 1L11 6" fill="none" stroke="#444" stroke-width="1.2"/></svg>
<svg style="left:7px;top:47px;" width="31" height="34" viewBox="0 0 31 34"><rect x="1.5" y="4" width="21" height="25" rx="1" fill="#e9c27e"/><rect x="7" y="1" width="10" height="5" rx="1" fill="#6d6d6d"/><path d="M15.5 13.5h8l5 5v14h-13z" fill="#fff" stroke="#555"/><path d="M23.5 13.5v5h5" fill="none" stroke="#555"/></svg>
<div class="t ls" style="top:80.9px;font-size:12px;line-height:16px;color:#333;left:8px;"><span class=c>粘贴</span></div>
<svg style="left:18px;top:102px;" width="6" height="4" viewBox="0 0 6 4"><path d="M0.5 0.5L3 3.5L5.5 0.5" fill="none" stroke="#555" stroke-width="1.1"/></svg>
<svg style="left:44px;top:47px;" width="16" height="15" viewBox="0 0 16 15"><circle cx="3.5" cy="11" r="2.6" fill="none" stroke="#a6a6a6" stroke-width="1.2"/><circle cx="12" cy="11" r="2.6" fill="none" stroke="#a6a6a6" stroke-width="1.2"/><path d="M5 9L11.5 1M10.5 9L4 1" stroke="#a6a6a6" stroke-width="1.2"/></svg>
<div class="t ls" style="top:48.4px;font-size:12px;line-height:16px;color:#a6a6a6;left:63px;"><span class=c>剪切</span></div>
<svg style="left:44px;top:70px;" width="16" height="16" viewBox="0 0 16 16"><path d="M1.5 1.5h6l2 2v8h-8z" fill="#fff" stroke="#a6a6a6"/><path d="M6.5 5.5h6l2 2v8h-8z" fill="#fff" stroke="#a6a6a6"/><path d="M8.5 9.5h4M8.5 12h4" stroke="#a6a6a6"/></svg>
<div class="t ls" style="top:70.4px;font-size:12px;line-height:16px;color:#a6a6a6;left:63px;"><span class=c>复制</span></div>
<svg style="left:44px;top:92px;" width="16" height="16" viewBox="0 0 16 16"><path d="M1 12l5-5 3 3-5 5z" fill="#e9c27e"/><path d="M7 7l5-5 3 3-5 5z" fill="#555"/></svg>
<div class="t ls" style="top:93.4px;font-size:12px;line-height:16px;color:#333;left:63px;"><span class=c>格式刷</span></div>
<div style="left:122px;top:52px;width:107px;height:23px;background:#fff;border:1px solid #b9b9b9;box-sizing:border-box"></div>
<div class="t ls" style="top:55.44px;font-size:13px;line-height:17px;color:#222;left:124px;"><span class=c>宋体</span></div>
<svg style="left:219px;top:62px;" width="7" height="4" viewBox="0 0 7 4"><path d="M0 0H7L3.5 3.5Z" fill="#555"/></svg>
<div style="left:231px;top:52px;width:47px;height:23px;background:#fff;border:1px solid #b9b9b9;box-sizing:border-box"></div>
<div class="t ls" style="top:55.18px;font-size:13px;line-height:17px;color:#222;left:234px;">11</div>
<svg style="left:268px;top:62px;" width="7" height="4" viewBox="0 0 7 4"><path d="M0 0H7L3.5 3.5Z" fill="#555"/></svg>
<svg style="left:285px;top:55px;" width="17" height="18" viewBox="0 0 17 18"><text x="0" y="17" font-family="Liberation Sans" font-weight="bold" font-size="15" fill="#555">A</text><path d="M10.5 4l2.5-3 2.5 3z" fill="#3c79c0"/></svg>
<svg style="left:310px;top:55px;" width="16" height="18" viewBox="0 0 16 18"><text x="0" y="17" font-family="Liberation Sans" font-weight="bold" font-size="11" fill="#555">A</text><path d="M9.5 1.5h5.5l-2.75 3z" fill="#3c79c0"/></svg>
<div style="left:330px;top:52px;width:1px;height:21px;background:#cfcfcf"></div>
<div class="t ls" style="top:54.19px;font-size:14px;line-height:18px;color:#555;left:338px;font-weight:bold">Aa</div>
<svg style="left:357px;top:62px;" width="7" height="4" viewBox="0 0 7 4"><path d="M0.5 0.5L3.5 3.5L6.5 0.5" fill="none" stroke="#444" stroke-width="1.1"/></svg>
<div style="left:375px;top:52px;width:1px;height:21px;background:#cfcfcf"></div>
<svg style="left:384px;top:54px;" width="16" height="17" viewBox="0 0 16 17"><text x="0" y="10" font-family="Liberation Sans" font-size="10" fill="#555">A</text><path d="M5 13l6-6 4 4-6 6z" fill="#ee8a99"/></svg>
<svg style="left:406px;top:54px;" width="18" height="18" viewBox="0 0 18 18"><text x="0.5" y="7" font-family="Liberation Sans" font-size="8" fill="#444" textLength="16">wén</text><path d="M9 8.3v1.6M4.5 10.4h9M6 10.8c1.3 3 3.5 4.8 7 6M12 10.8c-1.3 3-3.5 4.8-7 6" fill="none" stroke="#3c79c0" stroke-width="1.4"/></svg>
<svg style="left:431px;top:55px;" width="17" height="16" viewBox="0 0 17 16"><rect x="0.5" y="0.5" width="15.5" height="15" fill="none" stroke="#3c79c0"/><text x="2.5" y="13.5" font-family="Liberation Sans" font-weight="bold" font-size="14" fill="#444">A</text></svg>
<div class="t ls" style="top:86.18px;font-size:13px;line-height:17px;color:#444;left:128px;font-weight:bold">B</div>
<div class="t lr" style="top:85.81px;font-size:14px;line-height:18px;color:#555;left:152px;font-style:italic;font-weight:bold">I</div>
<div class="t ls" style="top:86.18px;font-size:13px;line-height:17px;color:#444;left:176px;font-weight:bold;text-decoration:underline">U</div>
<svg style="left:195px;top:94px;" width="7" height="4" viewBox="0 0 7 4"><path d="M0.5 0.5L3.5 3.5L6.5 0.5" fill="none" stroke="#444" stroke-width="1.1"/></svg>
<svg style="left:211px;top:87px;" width="18" height="14" viewBox="0 0 18 14"><text x="0" y="11" font-family="Liberation Sans" font-size="11" fill="#555">abc</text><path d="M0 7.5h18" stroke="#555"/></svg>
<svg style="left:237px;top:87px;" width="14" height="15" viewBox="0 0 14 15"><text x="0" y="11" font-family="Liberation Sans" font-weight="bold" font-size="12" fill="#555">x</text><text x="8" y="14" font-family="Liberation Sans" font-size="7" fill="#3c70b6">2</text></svg>
<svg style="left:261px;top:85px;" width="14" height="15" viewBox="0 0 14 15"><text x="0" y="13" font-family="Liberation Sans" font-weight="bold" font-size="12" fill="#555">x</text><text x="8" y="6" font-family="Liberation Sans" font-size="7" fill="#3c70b6">2</text></svg>
<div style="left:283px;top:84px;width:1px;height:21px;background:#cfcfcf"></div>
<svg style="left:291px;top:85px;" width="17" height="17" viewBox="0 0 17 17"><text x="0.5" y="15.5" font-family="Liberation Sans" font-weight="bold" font-size="17" fill="#fff" stroke="#bdbdbd" stroke-width="1.1">A</text></svg>
<svg style="left:311px;top:94px;" width="7" height="4" viewBox="0 0 7 4"><path d="M0.5 0.5L3.5 3.5L6.5 0.5" fill="none" stroke="#bbb" stroke-width="1.1"/></svg>
<svg style="left:328px;top:85px;" width="18" height="18" viewBox="0 0 18 18"><text x="0" y="8" font-family="Liberation Sans" font-size="9" fill="#555">ab</text><path d="M4 12l8-8 2 2-8 8z" fill="#777"/><rect x="1" y="13" width="16" height="4" fill="#ffff00"/></svg>
<svg style="left:351px;top:94px;" width="7" height="4" viewBox="0 0 7 4"><path d="M0.5 0.5L3.5 3.5L6.5 0.5" fill="none" stroke="#444" stroke-width="1.1"/></svg>
<svg style="left:367px;top:85px;" width="18" height="18" viewBox="0 0 18 18"><text x="2" y="13" font-family="Liberation Sans" font-weight="bold" font-size="15" fill="#555">A</text><rect x="0.5" y="13" width="16" height="3.5" fill="#ff0000"/></svg>
<svg style="left:390px;top:94px;" width="7" height="4" viewBox="0 0 7 4"><path d="M0.5 0.5L3.5 3.5L6.5 0.5" fill="none" stroke="#444" stroke-width="1.1"/></svg>
<svg style="left:408px;top:87px;" width="14" height="14" viewBox="0 0 14 14"><rect width="14" height="14" fill="#bdbdbd"/><text x="1.5" y="12.5" font-family="Liberation Sans" font-weight="bold" font-size="13" fill="#555">A</text></svg>
<svg style="left:431px;top:86px;" width="17" height="17" viewBox="0 0 17 17"><circle cx="8.5" cy="8.5" r="7.8" fill="none" stroke="#555"/><path d="M8.5 3.2v1.3M4.6 6.2V4.8h7.8v1.4M6 7h4.8l-2.3 2M4.2 9.6h8.6M8.5 8.8v4.6l-1.4-.8" fill="none" stroke="#555" stroke-width="1"/></svg>
<svg style="left:469px;top:55px;" width="15" height="14" viewBox="0 0 15 14"><circle cx="1.5" cy="1.5" r="1.5" fill="#3c70b6"/><circle cx="1.5" cy="7" r="1.5" fill="#3c70b6"/><circle cx="1.5" cy="12.5" r="1.5" fill="#3c70b6"/><rect x="5" y="1.0" width="9" height="1" fill="#666"/><rect x="5" y="6.5" width="9" height="1" fill="#666"/><rect x="5" y="12.0" width="9" height="1" fill="#666"/></svg>
<svg style="left:490px;top:62px;" width="7" height="4" viewBox="0 0 7 4"><path d="M0.5 0.5L3.5 3.5L6.5 0.5" fill="none" stroke="#444" stroke-width="1.1"/></svg>
<svg style="left:508px;top:55px;" width="15" height="14" viewBox="0 0 15 14"><text x="0" y="5" font-family="Liberation Sans" font-size="5" fill="#3c70b6">1</text><text x="0" y="10" font-family="Liberation Sans" font-size="5" fill="#3c70b6">2</text><text x="0" y="15" font-family="Liberation Sans" font-size="5" fill="#3c70b6">3</text><rect x="5" y="1.0" width="9" height="1" fill="#666"/><rect x="5" y="6.5" width="9" height="1" fill="#666"/><rect x="5" y="12.0" width="9" height="1" fill="#666"/></svg>
<svg style="left:529px;top:62px;" width="7" height="4" viewBox="0 0 7 4"><path d="M0.5 0.5L3.5 3.5L6.5 0.5" fill="none" stroke="#444" stroke-width="1.1"/></svg>
<svg style="left:547px;top:55px;" width="17" height="14" viewBox="0 0 17 14"><text x="0" y="5" font-family="Liberation Sans" font-size="5" fill="#3c70b6">1</text><rect x="6" y="1" width="10" height="1" fill="#666"/><rect x="8" y="7" width="8" height="1" fill="#666"/><rect x="10" y="13" width="6" height="1" fill="#666"/></svg>
<svg style="left:567px;top:62px;" width="7" height="4" viewBox="0 0 7 4"><path d="M0.5 0.5L3.5 3.5L6.5 0.5" fill="none" stroke="#444" stroke-width="1.1"/></svg>
<div style="left:584px;top:53px;width:1px;height:20px;background:#cfcfcf"></div>
<svg style="left:591px;top:55px;" width="18" height="15" viewBox="0 0 18 15"><path d="M1 1.5H17M9.5 4.3H17M9.5 7.4H17M9.5 10.5H17M1 13.3H17" stroke="#555" stroke-width="1"/><path d="M1.8 7.4L5 4.6M1.8 7.4L5 10.2M1.8 7.4H8" fill="none" stroke="#3c79c0" stroke-width="1.9"/></svg>
<svg style="left:615px;top:55px;" width="18" height="15" viewBox="0 0 18 15"><path d="M1 1.5H17M9.5 4.3H17M9.5 7.4H17M9.5 10.5H17M1 13.3H17" stroke="#555" stroke-width="1"/><path d="M8.2 7.4L5 4.6M8.2 7.4L5 10.2M8.2 7.4H1" fill="none" stroke="#3c79c0" stroke-width="1.9"/></svg>
<div style="left:640px;top:53px;width:1px;height:20px;background:#cfcfcf"></div>
<svg style="left:646px;top:54px;" width="18" height="16" viewBox="0 0 18 16"><path d="M2.5 14.5L8.5 5.5L14.5 14.5M4.5 12H12.5" fill="none" stroke="#555" stroke-width="2"/><path d="M1 5L4.5 2M1 5L4.5 7M12.5 2L16 5L12.5 7" fill="none" stroke="#3c79c0" stroke-width="1.4"/></svg>
<svg style="left:668px;top:62px;" width="7" height="4" viewBox="0 0 7 4"><path d="M0.5 0.5L3.5 3.5L6.5 0.5" fill="none" stroke="#444" stroke-width="1.1"/></svg>
<div style="left:684px;top:53px;width:1px;height:20px;background:#cfcfcf"></div>
<svg style="left:692px;top:54px;" width="16" height="17" viewBox="0 0 16 17"><path d="M2 7.5L4.5 1L7 7.5M2.8 5.5H6.2" fill="none" stroke="#3c79c0" stroke-width="1.3"/><path d="M2 9.5H7L2 15.5H7" fill="none" stroke="#8a4fbf" stroke-width="1.4"/><path d="M12 1V15M9.5 12.5L12 15.5L14.5 12.5" fill="none" stroke="#555" stroke-width="1.3"/></svg>
<div style="left:715px;top:53px;width:1px;height:20px;background:#cfcfcf"></div>
<svg style="left:725px;top:56px;" width="12" height="14" viewBox="0 0 12 14"><path d="M10.5 1V5.5H3.5M5.8 3.2L3.5 5.5L5.8 7.8" fill="none" stroke="#555" stroke-width="1.3"/><path d="M1 10.5H7.5M5.5 8.5L7.8 10.5L5.5 12.5" fill="none" stroke="#555" stroke-width="1.3"/></svg>
<div style="left:466px;top:83.5px;width:22px;height:22px;background:#c6c6c6;border:1px solid #a3a3a3;box-sizing:border-box"></div>
<svg style="left:469px;top:89px;" width="15" height="11" viewBox="0 0 15 11"><rect x="0" y="0" width="15" height="1" fill="#666"/><rect x="0" y="3" width="15" height="1" fill="#666"/><rect x="0" y="6" width="15" height="1" fill="#666"/><rect x="0" y="9" width="15" height="1" fill="#666"/></svg>
<svg style="left:494px;top:89px;" width="15" height="11" viewBox="0 0 15 11"><rect x="0" y="0" width="15" height="1" fill="#666"/><rect x="3" y="3" width="9" height="1" fill="#666"/><rect x="0" y="6" width="15" height="1" fill="#666"/><rect x="3" y="9" width="9" height="1" fill="#666"/></svg>
<svg style="left:518px;top:89px;" width="15" height="11" viewBox="0 0 15 11"><rect x="0" y="0" width="15" height="1" fill="#666"/><rect x="5" y="3" width="10" height="1" fill="#666"/><rect x="0" y="6" width="15" height="1" fill="#666"/><rect x="5" y="9" width="10" height="1" fill="#666"/></svg>
<svg style="left:542px;top:89px;" width="15" height="11" viewBox="0 0 15 11"><rect x="0" y="0" width="15" height="1" fill="#666"/><rect x="0" y="3" width="15" height="1" fill="#666"/><rect x="0" y="6" width="15" height="1" fill="#666"/><rect x="0" y="9" width="15" height="1" fill="#666"/></svg>
<svg style="left:564px;top:85px;" width="18" height="17" viewBox="0 0 18 17"><rect x="3" y="6.0" width="12" height="1" fill="#555"/><rect x="3" y="8.3" width="12" height="1" fill="#555"/><rect x="3" y="10.6" width="12" height="1" fill="#555"/><rect x="3" y="12.899999999999999" width="12" height="1" fill="#555"/><rect x="3" y="15.2" width="12" height="1" fill="#555"/><path d="M1 1V16M17 1V16" stroke="#3c79c0" stroke-width="1.3"/><path d="M4 3.5H14M6 1.5L4 3.5L6 5.5M12 1.5L14 3.5L12 5.5" fill="none" stroke="#3c79c0" stroke-width="1.2"/></svg>
<div style="left:588px;top:84px;width:1px;height:21px;background:#cfcfcf"></div>
<svg style="left:596px;top:85px;" width="16" height="17" viewBox="0 0 16 17"><path d="M7 4.5H15M7 7.5H15M7 10.5H15M7 13.5H15" stroke="#555" stroke-width="1"/><path d="M3 1.5V15.5M0.8 3.8L3 1.2L5.2 3.8M0.8 13.2L3 15.8L5.2 13.2" fill="none" stroke="#3c79c0" stroke-width="1.4"/></svg>
<svg style="left:616px;top:94px;" width="7" height="4" viewBox="0 0 7 4"><path d="M0.5 0.5L3.5 3.5L6.5 0.5" fill="none" stroke="#444" stroke-width="1.1"/></svg>
<div style="left:633px;top:84px;width:1px;height:21px;background:#cfcfcf"></div>
<svg style="left:640px;top:85px;" width="18" height="18" viewBox="0 0 18 18"><path d="M2.5 7.5L7.5 2.5L12.5 7.5L7.5 12.5Z" fill="#fff" stroke="#555" stroke-width="1.1"/><path d="M7 0.5V5" stroke="#555" stroke-width="1.3"/><path d="M13 7c2 .8 2.5 2.5 1.5 4.5" fill="none" stroke="#3c79c0" stroke-width="2"/><rect x="1.5" y="13" width="15" height="3.5" fill="#fff" stroke="#777"/></svg>
<svg style="left:663px;top:94px;" width="7" height="4" viewBox="0 0 7 4"><path d="M0.5 0.5L3.5 3.5L6.5 0.5" fill="none" stroke="#444" stroke-width="1.1"/></svg>
<svg style="left:680px;top:86px;" width="15" height="15" viewBox="0 0 15 15"><rect x="1" y="1" width="1" height="1" fill="#555"/><rect x="3" y="1" width="1" height="1" fill="#555"/><rect x="5" y="1" width="1" height="1" fill="#555"/><rect x="7" y="1" width="1" height="1" fill="#555"/><rect x="9" y="1" width="1" height="1" fill="#555"/><rect x="11" y="1" width="1" height="1" fill="#555"/><rect x="13" y="1" width="1" height="1" fill="#555"/><rect x="1" y="7" width="1" height="1" fill="#555"/><rect x="3" y="7" width="1" height="1" fill="#555"/><rect x="5" y="7" width="1" height="1" fill="#555"/><rect x="7" y="7" width="1" height="1" fill="#555"/><rect x="9" y="7" width="1" height="1" fill="#555"/><rect x="11" y="7" width="1" height="1" fill="#555"/><rect x="13" y="7" width="1" height="1" fill="#555"/><rect x="1" y="3" width="1" height="1" fill="#555"/><rect x="1" y="5" width="1" height="1" fill="#555"/><rect x="1" y="7" width="1" height="1" fill="#555"/><rect x="1" y="9" width="1" height="1" fill="#555"/><rect x="1" y="11" width="1" height="1" fill="#555"/><rect x="1" y="13" width="1" height="1" fill="#555"/><rect x="7" y="3" width="1" height="1" fill="#555"/><rect x="7" y="5" width="1" height="1" fill="#555"/><rect x="7" y="7" width="1" height="1" fill="#555"/><rect x="7" y="9" width="1" height="1" fill="#555"/><rect x="7" y="11" width="1" height="1" fill="#555"/><rect x="7" y="13" width="1" height="1" fill="#555"/><rect x="13" y="3" width="1" height="1" fill="#555"/><rect x="13" y="5" width="1" height="1" fill="#555"/><rect x="13" y="7" width="1" height="1" fill="#555"/><rect x="13" y="9" width="1" height="1" fill="#555"/><rect x="13" y="11" width="1" height="1" fill="#555"/><rect x="13" y="13" width="1" height="1" fill="#555"/><rect x="1" y="13" width="13" height="1.2" fill="#444"/></svg>
<svg style="left:702px;top:94px;" width="7" height="4" viewBox="0 0 7 4"><path d="M0.5 0.5L3.5 3.5L6.5 0.5" fill="none" stroke="#444" stroke-width="1.1"/></svg>
<div style="left:759px;top:47.5px;width:868px;height:59.5px;background:#fff;border:1px solid #c6c6c6;box-sizing:border-box;border-right:none"></div>
<div style="left:1626px;top:47.5px;width:24px;height:59.5px;background:#f3f3f3;border:1px solid #b1b1b1;box-sizing:border-box"></div>
<svg style="left:1633px;top:72px;" width="10" height="8" viewBox="0 0 10 8"><path d="M1 0.5h8M1.5 3l3.5 3.5L8.5 3" fill="none" stroke="#444" stroke-width="1.1"/></svg>
<svg style="left:1672px;top:49px;" width="15" height="13" viewBox="0 0 15 13"><circle cx="9" cy="5" r="4" fill="none" stroke="#3c70b6" stroke-width="1.6"/><path d="M6 8l-5 4" stroke="#3c70b6" stroke-width="2.2"/></svg>
<div class="t ls" style="top:47.9px;font-size:12px;line-height:16px;color:#333;left:1690.6px;"><span class=c>查找</span></div>
<svg style="left:1730px;top:54px;" width="7" height="4" viewBox="0 0 7 4"><path d="M0.5 0.5L3.5 3.5L6.5 0.5" fill="none" stroke="#444" stroke-width="1.1"/></svg>
<svg style="left:1671px;top:70px;" width="18" height="16" viewBox="0 0 18 16"><text x="0.5" y="7.5" font-family="Liberation Sans" font-weight="bold" font-size="9" fill="#555">a</text><text x="6" y="7.5" font-family="Liberation Sans" font-weight="bold" font-size="9" fill="#8a4fbf">b</text><text x="4" y="15.5" font-family="Liberation Sans" font-weight="bold" font-size="9" fill="#3c79c0">ac</text><path d="M2 9.5v3.5h2.5M3.3 11.8l1.2 1.2-1.2 1.2" fill="none" stroke="#3c79c0" stroke-width="1.1"/></svg>
<div class="t ls" style="top:70.9px;font-size:12px;line-height:16px;color:#333;left:1690.6px;"><span class=c>替换</span></div>
<svg style="left:1675px;top:92px;" width="11" height="17" viewBox="0 0 11 17"><path d="M1 1v14l3.5-3.5 3 5 2-1-3-5h4z" fill="#fff" stroke="#555"/></svg>
<div class="t ls" style="top:93.4px;font-size:12px;line-height:16px;color:#333;left:1690.6px;"><span class=c>选择</span></div>
<svg style="left:1719px;top:100px;" width="7" height="4" viewBox="0 0 7 4"><path d="M0.5 0.5L3.5 3.5L6.5 0.5" fill="none" stroke="#444" stroke-width="1.1"/></svg>
<div style="left:1776px;top:57px;width:11px;height:11px;border-radius:50%;background:#ff9a00;filter:blur(0.4px)"></div>
<div class="t ls" style="top:81.9px;font-size:12px;line-height:16px;color:#333;left:1777px;"><span class=c>加</span></div>
<div class="t ls" style="top:95.4px;font-size:12px;line-height:16px;color:#333;left:1771px;"><span class=c>载项</span></div>
<div style="left:765.8px;top:50px;width:62px;height:30px;overflow:hidden">
<div class="t lm" style="left:0;top:0;width:62px;text-align:center;font-size:13px;line-height:30px;color:#000;white-space:pre;letter-spacing:-1.3px;top:2.2px">AaBbCcDc</div>
</div>
<div class="t ls" style="top:83.9px;font-size:12px;line-height:16px;color:#666;left:760.8px;width:72px;text-align:center;"><span class=c>正文</span></div>
<svg style="left:774.8px;top:88px;" width="7" height="7" viewBox="0 0 7 7"><path d="M5.5 0.5v4H1M2.5 3L1 4.5 2.5 6" fill="none" stroke="#777"/></svg>
<div style="left:837.8px;top:50px;width:62px;height:30px;overflow:hidden">
<div class="t lm" style="left:0;top:0;width:62px;text-align:center;font-size:13px;line-height:30px;color:#000;white-space:pre;letter-spacing:-1.3px;top:2.2px">AaBbCcDc</div>
</div>
<div class="t ls" style="top:83.9px;font-size:12px;line-height:16px;color:#666;left:832.8px;width:72px;text-align:center;">Table P...</div>
<svg style="left:825.8px;top:88px;" width="7" height="7" viewBox="0 0 7 7"><path d="M5.5 0.5v4H1M2.5 3L1 4.5 2.5 6" fill="none" stroke="#777"/></svg>
<div style="left:909.8px;top:50px;width:62px;height:30px;overflow:hidden">
<div class="t lr" style="left:0;top:0;width:62px;text-align:center;font-size:15px;line-height:30px;color:#000;white-space:pre;font-weight:bold;top:2.22px">AaBbCcI</div>
</div>
<div class="t ls" style="top:83.9px;font-size:12px;line-height:16px;color:#666;left:904.8px;width:72px;text-align:center;">TOC 1</div>
<svg style="left:914.3px;top:88px;" width="7" height="7" viewBox="0 0 7 7"><path d="M5.5 0.5v4H1M2.5 3L1 4.5 2.5 6" fill="none" stroke="#777"/></svg>
<div style="left:981.8px;top:50px;width:62px;height:30px;overflow:hidden">
<div class="t lm" style="left:0;top:0;width:62px;text-align:center;font-size:13px;line-height:30px;color:#000;white-space:pre;letter-spacing:-1.3px;top:2.2px">AaBbCcDc</div>
</div>
<div class="t ls" style="top:83.9px;font-size:12px;line-height:16px;color:#666;left:976.8px;width:72px;text-align:center;">TOC 2</div>
<svg style="left:986.3px;top:88px;" width="7" height="7" viewBox="0 0 7 7"><path d="M5.5 0.5v4H1M2.5 3L1 4.5 2.5 6" fill="none" stroke="#777"/></svg>
<div style="left:1053.8px;top:50px;width:62px;height:30px;overflow:hidden">
<div class="t lm" style="left:0;top:0;width:62px;text-align:center;font-size:13px;line-height:30px;color:#000;white-space:pre;letter-spacing:-1.3px;top:2.2px">AaBbCcDc</div>
</div>
<div class="t ls" style="top:83.9px;font-size:12px;line-height:16px;color:#666;left:1048.8px;width:72px;text-align:center;"><span class=c>列表段落</span></div>
<svg style="left:1050.8px;top:88px;" width="7" height="7" viewBox="0 0 7 7"><path d="M5.5 0.5v4H1M2.5 3L1 4.5 2.5 6" fill="none" stroke="#777"/></svg>
<div style="left:1125.8px;top:50px;width:62px;height:30px;overflow:hidden">
<div class="t lm" style="left:0;top:0;width:62px;text-align:center;font-size:13px;line-height:30px;color:#000;white-space:pre;letter-spacing:-1.3px;top:2.2px">AaBbCcDc</div>
</div>
<div class="t ls" style="top:83.9px;font-size:12px;line-height:16px;color:#666;left:1120.8px;width:72px;text-align:center;"><span class=c>无间隔</span></div>
<svg style="left:1128.8px;top:88px;" width="7" height="7" viewBox="0 0 7 7"><path d="M5.5 0.5v4H1M2.5 3L1 4.5 2.5 6" fill="none" stroke="#777"/></svg>
<div style="left:1193.2px;top:48.7px;width:71.3px;height:55.9px;border:1px solid #9e9e9e;box-sizing:border-box"></div>
<div style="left:1194.2px;top:49.7px;width:69.3px;height:53.9px;border:2px solid #d6d6d6;box-sizing:border-box"></div>
<div style="left:1197.8px;top:50px;width:62px;height:30px;overflow:hidden">
<div class="t lm" style="left:0;top:0;width:62px;text-align:center;font-size:13px;line-height:30px;color:#000;white-space:pre;letter-spacing:-1.3px;top:2.2px">AaBbCcDc</div>
</div>
<div class="t ls" style="top:83.9px;font-size:12px;line-height:16px;color:#666;left:1192.8px;width:72px;text-align:center;"><span class=c>正文文本</span></div>
<svg style="left:1194.8px;top:88px;" width="7" height="7" viewBox="0 0 7 7"><path d="M5.5 0.5v4H1M2.5 3L1 4.5 2.5 6" fill="none" stroke="#777"/></svg>
<div style="left:1269.8px;top:50px;width:62px;height:30px;overflow:hidden">
<div class="t ls" style="left:0;top:0;width:62px;text-align:center;font-size:19px;line-height:30px;color:#000;white-space:pre;font-weight:bold;top:2.29px">AaBb</div>
</div>
<div class="t ls" style="top:83.9px;font-size:12px;line-height:16px;color:#666;left:1264.8px;width:72px;text-align:center;"><span class=c>标题</span> 1</div>
<svg style="left:1272.2px;top:88px;" width="7" height="7" viewBox="0 0 7 7"><path d="M5.5 0.5v4H1M2.5 3L1 4.5 2.5 6" fill="none" stroke="#777"/></svg>
<div style="left:1341.8px;top:50px;width:62px;height:30px;overflow:hidden">
<div class="t lr" style="left:0;top:0;width:62px;text-align:center;font-size:17px;line-height:30px;color:#000;white-space:pre;;top:2.26px">AaBbC</div>
</div>
<div class="t ls" style="top:83.9px;font-size:12px;line-height:16px;color:#666;left:1336.8px;width:72px;text-align:center;"><span class=c>标题</span> 2</div>
<svg style="left:1344.2px;top:88px;" width="7" height="7" viewBox="0 0 7 7"><path d="M5.5 0.5v4H1M2.5 3L1 4.5 2.5 6" fill="none" stroke="#777"/></svg>
<div style="left:1413.8px;top:50px;width:62px;height:30px;overflow:hidden">
<div class="t lr" style="left:0;top:0;width:62px;text-align:center;font-size:16px;line-height:30px;color:#000;white-space:pre;;top:2.24px">AaBbCc</div>
</div>
<div class="t ls" style="top:83.9px;font-size:12px;line-height:16px;color:#666;left:1408.8px;width:72px;text-align:center;"><span class=c>标题</span> 3</div>
<svg style="left:1416.2px;top:88px;" width="7" height="7" viewBox="0 0 7 7"><path d="M5.5 0.5v4H1M2.5 3L1 4.5 2.5 6" fill="none" stroke="#777"/></svg>
<div style="left:1485.8px;top:50px;width:62px;height:30px;overflow:hidden">
<div class="t lr" style="left:0;top:0;width:62px;text-align:center;font-size:16px;line-height:30px;color:#1f4e99;white-space:pre;;top:2.24px">AaBbCc</div>
</div>
<div class="t ls" style="top:83.9px;font-size:12px;line-height:16px;color:#666;left:1480.8px;width:72px;text-align:center;"><span class=c>标题</span> 4</div>
<svg style="left:1488.2px;top:88px;" width="7" height="7" viewBox="0 0 7 7"><path d="M5.5 0.5v4H1M2.5 3L1 4.5 2.5 6" fill="none" stroke="#777"/></svg>
<div style="left:1557.8px;top:50px;width:62px;height:30px;overflow:hidden">
<div class="t lr" style="left:0;top:0;width:62px;text-align:center;font-size:14px;line-height:30px;color:#000;white-space:pre;font-weight:bold;text-decoration:underline;top:2.21px">AaBbCcI</div>
</div>
<div class="t ls" style="top:83.9px;font-size:12px;line-height:16px;color:#666;left:1552.8px;width:72px;text-align:center;"><span class=c>标题</span> 5</div>
<svg style="left:1560.2px;top:88px;" width="7" height="7" viewBox="0 0 7 7"><path d="M5.5 0.5v4H1M2.5 3L1 4.5 2.5 6" fill="none" stroke="#777"/></svg>
<div style="left:340px;top:137px;width:1px;height:859px;background:#c2c2c2"></div>
<div class="t ls" style="top:150.17px;font-size:20px;line-height:26px;color:#333;left:5px;"><span class=c>导航</span></div>
<svg style="left:267px;top:154px;" width="17" height="11" viewBox="0 0 17 11"><path d="M1 1.5l7.5 7.5 7.5-7.5" fill="none" stroke="#444" stroke-width="1.3"/></svg>
<svg style="left:310px;top:153px;" width="13" height="13" viewBox="0 0 13 13"><path d="M1 1l11 11M12 1L1 12" fill="none" stroke="#444" stroke-width="1.3"/></svg>
<div style="left:5px;top:192px;width:317px;height:26px;background:#fff;border:1px solid #b9b9b9;box-sizing:border-box"></div>
<div class="t ls" style="top:196.9px;font-size:12px;line-height:16px;color:#777;left:12px;"><span class=c>在文档中搜索</span></div>
<svg style="left:294px;top:196px;" width="15" height="16" viewBox="0 0 15 16"><circle cx="9" cy="6" r="4.2" fill="none" stroke="#2b579a" stroke-width="2"/><path d="M6 9.5l-4.5 5" stroke="#2b579a" stroke-width="2.4"/></svg>
<svg style="left:312px;top:203px;" width="7" height="4" viewBox="0 0 7 4"><path d="M0.5 0.5l3 3 3-3" fill="none" stroke="#444"/></svg>
<div class="t ls" style="top:235.4px;font-size:12px;line-height:16px;color:#2b579a;left:5px;font-weight:bold"><span class=c>标题</span></div>
<div class="t ls" style="top:235.4px;font-size:12px;line-height:16px;color:#444;left:55px;"><span class=c>页面</span></div>
<div class="t ls" style="top:235.4px;font-size:12px;line-height:16px;color:#444;left:103.5px;"><span class=c>结果</span></div>
<div style="left:5px;top:258px;width:26px;height:3px;background:#2b579a"></div>
<div style="left:53px;top:958.85px;width:256px;height:20px;background:#c5d8f2"></div>
<div class="t ls" style="top:266.6px;font-size:12px;line-height:16px;color:#444;left:42.4px;">5. <span class=c>开标</span></div>
<div class="t ls" style="top:287.65px;font-size:12px;line-height:16px;color:#444;left:42.4px;">6. <span class=c>评标</span></div>
<div class="t ls" style="top:308.7px;font-size:12px;line-height:16px;color:#444;left:42.4px;">7. <span class=c>合同授予</span></div>
<div class="t ls" style="top:329.75px;font-size:12px;line-height:16px;color:#444;left:42.4px;">8. <span class=c>纪律和监督</span></div>
<div class="t ls" style="top:350.8px;font-size:12px;line-height:16px;color:#444;left:42.4px;">9. <span class=c>是否采用电子招标投标</span></div>
<div class="t ls" style="top:371.85px;font-size:12px;line-height:16px;color:#444;left:42.4px;">10. <span class=c>需要补充的其他内容</span></div>
<div class="t ls" style="top:392.9px;font-size:12px;line-height:16px;color:#444;left:42.4px;"><span class=c>评标办法前附表</span></div>
<div class="t ls" style="top:413.95px;font-size:12px;line-height:16px;color:#444;left:42.4px;">1. <span class=c>评标方法</span></div>
<div class="t ls" style="top:435px;font-size:12px;line-height:16px;color:#444;left:42.4px;">2. <span class=c>评审标准</span></div>
<div class="t ls" style="top:456.05px;font-size:12px;line-height:16px;color:#444;left:42.4px;">3. <span class=c>评标程序</span></div>
<div class="t ls" style="top:477.1px;font-size:12px;line-height:16px;color:#444;left:42.4px;">3.2 <span class=c>详细评审</span></div>
<div class="t ls" style="top:498.15px;font-size:12px;line-height:16px;color:#444;left:42.4px;">3.3 <span class=c>投标文件的澄清</span></div>
<svg style="left:26.4px;top:522.8px;" width="8" height="8" viewBox="0 0 8 8"><path d="M7 0.5V7.5H0z" fill="#444"/></svg>
<div class="t ls" style="top:519.2px;font-size:12px;line-height:16px;color:#444;left:42.4px;">3.4 <span class=c>评标结果</span></div>
<div class="t ls" style="top:540.25px;font-size:12px;line-height:16px;color:#444;left:90.6px;"><span class="g g10"></span><span class=p><span style="position:relative;top:.5em;left:.12em">`</span></span><span class=c>制裁合规承诺</span></div>
<div class="t ls" style="top:561.3px;font-size:12px;line-height:16px;color:#444;left:90.6px;">2) <span class=c>如发生下列情形的</span><span class=p><span style="position:relative;left:.1em">,</span></span><span class=c>贵公司与本企业</span>...</div>
<div class="t ls" style="top:582.35px;font-size:12px;line-height:16px;color:#444;left:90.6px;">a. <span class=c>如果在前述第</span>(1)<span class=c>款的合规尽调过程</span>...</div>
<div class="t ls" style="top:603.4px;font-size:12px;line-height:16px;color:#444;left:90.6px;">b. <span class=c>如果本企业未能在贵公司指定期限内</span>...</div>
<div class="t ls" style="top:624.45px;font-size:12px;line-height:16px;color:#444;left:42.4px;"><span class="g g1"></span><span class=p><span style="position:relative;top:.5em;left:.12em">`</span></span><span class=c>服务内容</span></div>
<div class="t ls" style="top:645.5px;font-size:12px;line-height:16px;color:#444;left:42.4px;"><span class="g g2"></span><span class=p><span style="position:relative;top:.5em;left:.12em">`</span></span><span class=c>其他内容</span></div>
<div class="t ls" style="top:666.55px;font-size:12px;line-height:16px;color:#444;left:42.4px;"><span class="g g2"></span><span class=p><span style="position:relative;top:.5em;left:.12em">`</span></span><span class=c>授权委托书</span><span class=p><span style="position:relative;left:.6em">(</span></span><span class=c>适用于有委托代理人的情况</span><span class=p><span style="position:relative;left:.15em">)</span></span></div>
<div class="t ls" style="top:687.6px;font-size:12px;line-height:16px;color:#444;left:42.4px;"><span class="g g3"></span><span class=p><span style="position:relative;top:.5em;left:.12em">`</span></span><span class=c>联合体协议书</span><span class=p><span style="position:relative;left:.6em">(</span></span><span class=c>如适用</span><span class=p><span style="position:relative;left:.15em">)</span></span></div>
<div class="t ls" style="top:708.65px;font-size:12px;line-height:16px;color:#444;left:42.4px;"><span class=c>四</span><span class=p><span style="position:relative;top:.5em;left:.12em">`</span></span><span class=c>投标保证金</span></div>
<div class="t ls" style="top:729.7px;font-size:12px;line-height:16px;color:#444;left:42.4px;"><span class=c>五</span><span class=p><span style="position:relative;top:.5em;left:.12em">`</span></span><span class=c>投标报价表</span><span class=p><span style="position:relative;left:.6em">(</span></span><span class=c>分项报价表</span><span class=p><span style="position:relative;left:.15em">)</span></span></div>
<svg style="left:26.4px;top:754.35px;" width="8" height="8" viewBox="0 0 8 8"><path d="M7 0.5V7.5H0z" fill="#444"/></svg>
<div class="t ls" style="top:750.75px;font-size:12px;line-height:16px;color:#444;left:42.4px;"><span class=c>六</span><span class=p><span style="position:relative;top:.5em;left:.12em">`</span></span><span class=c>资格审查资料</span></div>
<div class="t ls" style="top:771.8px;font-size:12px;line-height:16px;color:#444;left:90.6px;">2) <span class=c>如发生下列情形的</span><span class=p><span style="position:relative;left:.1em">,</span></span><span class=c>贵公司与本企业</span>...</div>
<div class="t ls" style="top:792.85px;font-size:12px;line-height:16px;color:#444;left:90.6px;">a. <span class=c>如果在前述第</span>(1)<span class=c>款的合规尽调过程</span>...</div>
<div class="t ls" style="top:813.9px;font-size:12px;line-height:16px;color:#444;left:90.6px;">b. <span class=c>如果本企业未能在贵公司指定期限内</span>...</div>
<div class="t ls" style="top:834.95px;font-size:12px;line-height:16px;color:#444;left:90.6px;"><span class=c>承诺方</span><span class=p><span style="position:relative;left:.3em">:</span></span></div>
<div class="t ls" style="top:856px;font-size:12px;line-height:16px;color:#444;left:90.6px;"><span class=c>日期</span><span class=p><span style="position:relative;left:.3em">:</span></span></div>
<div class="t ls" style="top:877.05px;font-size:12px;line-height:16px;color:#444;left:90.6px;"><span class=c>附件</span><span class="g g1"></span><span class=p><span style="position:relative;left:.3em">:</span></span><span class=c>供应商雇员和供应商聘请的第</span>...</div>
<div class="t ls" style="top:898.1px;font-size:12px;line-height:16px;color:#444;left:90.6px;"><span class=c>签名</span><span class=p><span style="position:relative;left:.3em">:</span></span></div>
<div class="t ls" style="top:919.15px;font-size:12px;line-height:16px;color:#444;left:90.6px;"><span class=c>日期</span><span class=p><span style="position:relative;left:.3em">:</span></span></div>
<svg style="left:26.4px;top:943.8px;" width="8" height="8" viewBox="0 0 8 8"><path d="M7 0.5V7.5H0z" fill="#444"/></svg>
<div class="t ls" style="top:940.2px;font-size:12px;line-height:16px;color:#444;left:42.4px;"><span class=c>七</span><span class=p><span style="position:relative;top:.5em;left:.12em">`</span></span><span class=c>其他资料</span></div>
<svg style="left:43px;top:963.85px;" width="7" height="10" viewBox="0 0 7 10"><path d="M0.7 0.8L5.8 5 0.7 9.2z" fill="none" stroke="#777" stroke-width="1"/></svg>
<div class="t ls" style="top:961.25px;font-size:12px;line-height:16px;color:#444;left:59px;"><span class=p><span style="position:relative;left:.6em">(</span></span><span class="g g1"></span><span class=p><span style="position:relative;left:.15em">)</span></span><span class=c>业绩</span></div>
<div style="left:341px;top:136px;width:29px;height:27px;background:#d8d8d8"></div>
<div style="left:345px;top:140px;width:20px;height:19px;background:#fbfbfb"></div>
<svg style="left:352px;top:148px;" width="7" height="7" viewBox="0 0 7 7"><path d="M1 0v6h6" fill="none" stroke="#555" stroke-width="2"/></svg>
<div style="left:345.7px;top:166px;width:17.3px;height:747.7px;background:#fff"></div>
<div style="left:345.7px;top:913.7px;width:17.3px;height:76.3px;background:#c6c6c6"></div>
<div class="t ls" style="left:339.3px;top:185.5px;width:30px;height:12px;line-height:12px;text-align:center;font-size:9.5px;color:#555;transform:rotate(-90deg)">22</div>
<div class="t ls" style="left:339.3px;top:227.14px;width:30px;height:12px;line-height:12px;text-align:center;font-size:9.5px;color:#555;transform:rotate(-90deg)">24</div>
<div class="t ls" style="left:339.3px;top:268.78px;width:30px;height:12px;line-height:12px;text-align:center;font-size:9.5px;color:#555;transform:rotate(-90deg)">26</div>
<div class="t ls" style="left:339.3px;top:310.42px;width:30px;height:12px;line-height:12px;text-align:center;font-size:9.5px;color:#555;transform:rotate(-90deg)">28</div>
<div class="t ls" style="left:339.3px;top:352.06px;width:30px;height:12px;line-height:12px;text-align:center;font-size:9.5px;color:#555;transform:rotate(-90deg)">30</div>
<div class="t ls" style="left:339.3px;top:393.7px;width:30px;height:12px;line-height:12px;text-align:center;font-size:9.5px;color:#555;transform:rotate(-90deg)">32</div>
<div class="t ls" style="left:339.3px;top:435.34px;width:30px;height:12px;line-height:12px;text-align:center;font-size:9.5px;color:#555;transform:rotate(-90deg)">34</div>
<div class="t ls" style="left:339.3px;top:476.98px;width:30px;height:12px;line-height:12px;text-align:center;font-size:9.5px;color:#555;transform:rotate(-90deg)">36</div>
<div class="t ls" style="left:339.3px;top:518.62px;width:30px;height:12px;line-height:12px;text-align:center;font-size:9.5px;color:#555;transform:rotate(-90deg)">38</div>
<div class="t ls" style="left:339.3px;top:560.26px;width:30px;height:12px;line-height:12px;text-align:center;font-size:9.5px;color:#555;transform:rotate(-90deg)">40</div>
<div class="t ls" style="left:339.3px;top:601.9px;width:30px;height:12px;line-height:12px;text-align:center;font-size:9.5px;color:#555;transform:rotate(-90deg)">42</div>
<div class="t ls" style="left:339.3px;top:643.54px;width:30px;height:12px;line-height:12px;text-align:center;font-size:9.5px;color:#555;transform:rotate(-90deg)">44</div>
<div class="t ls" style="left:339.3px;top:685.18px;width:30px;height:12px;line-height:12px;text-align:center;font-size:9.5px;color:#555;transform:rotate(-90deg)">46</div>
<div class="t ls" style="left:339.3px;top:726.82px;width:30px;height:12px;line-height:12px;text-align:center;font-size:9.5px;color:#555;transform:rotate(-90deg)">48</div>
<div class="t ls" style="left:339.3px;top:768.46px;width:30px;height:12px;line-height:12px;text-align:center;font-size:9.5px;color:#555;transform:rotate(-90deg)">50</div>
<div class="t ls" style="left:339.3px;top:810.1px;width:30px;height:12px;line-height:12px;text-align:center;font-size:9.5px;color:#555;transform:rotate(-90deg)">52</div>
<div class="t ls" style="left:339.3px;top:851.74px;width:30px;height:12px;line-height:12px;text-align:center;font-size:9.5px;color:#555;transform:rotate(-90deg)">54</div>
<div class="t ls" style="left:339.3px;top:893.38px;width:30px;height:12px;line-height:12px;text-align:center;font-size:9.5px;color:#555;transform:rotate(-90deg)">56</div>
<div class="t ls" style="left:339.3px;top:935.02px;width:30px;height:12px;line-height:12px;text-align:center;font-size:9.5px;color:#555;transform:rotate(-90deg)">58</div>
<div class="t ls" style="left:339.3px;top:976.66px;width:30px;height:12px;line-height:12px;text-align:center;font-size:9.5px;color:#555;transform:rotate(-90deg)">60</div>
<div style="left:353.5px;top:180.59px;width:6px;height:1px;background:#666"></div>
<div style="left:353.5px;top:201.41px;width:6px;height:1px;background:#666"></div>
<div style="left:353.5px;top:222.23px;width:6px;height:1px;background:#666"></div>
<div style="left:353.5px;top:243.05px;width:6px;height:1px;background:#666"></div>
<div style="left:353.5px;top:263.87px;width:6px;height:1px;background:#666"></div>
<div style="left:353.5px;top:284.69px;width:6px;height:1px;background:#666"></div>
<div style="left:353.5px;top:305.51px;width:6px;height:1px;background:#666"></div>
<div style="left:353.5px;top:326.33px;width:6px;height:1px;background:#666"></div>
<div style="left:353.5px;top:347.15px;width:6px;height:1px;background:#666"></div>
<div style="left:353.5px;top:367.97px;width:6px;height:1px;background:#666"></div>
<div style="left:353.5px;top:388.79px;width:6px;height:1px;background:#666"></div>
<div style="left:353.5px;top:409.61px;width:6px;height:1px;background:#666"></div>
<div style="left:353.5px;top:430.43px;width:6px;height:1px;background:#666"></div>
<div style="left:353.5px;top:451.25px;width:6px;height:1px;background:#666"></div>
<div style="left:353.5px;top:472.07px;width:6px;height:1px;background:#666"></div>
<div style="left:353.5px;top:492.89px;width:6px;height:1px;background:#666"></div>
<div style="left:353.5px;top:513.71px;width:6px;height:1px;background:#666"></div>
<div style="left:353.5px;top:534.53px;width:6px;height:1px;background:#666"></div>
<div style="left:353.5px;top:555.35px;width:6px;height:1px;background:#666"></div>
<div style="left:353.5px;top:576.17px;width:6px;height:1px;background:#666"></div>
<div style="left:353.5px;top:596.99px;width:6px;height:1px;background:#666"></div>
<div style="left:353.5px;top:617.81px;width:6px;height:1px;background:#666"></div>
<div style="left:353.5px;top:638.63px;width:6px;height:1px;background:#666"></div>
<div style="left:353.5px;top:659.45px;width:6px;height:1px;background:#666"></div>
<div style="left:353.5px;top:680.27px;width:6px;height:1px;background:#666"></div>
<div style="left:353.5px;top:701.09px;width:6px;height:1px;background:#666"></div>
<div style="left:353.5px;top:721.91px;width:6px;height:1px;background:#666"></div>
<div style="left:353.5px;top:742.73px;width:6px;height:1px;background:#666"></div>
<div style="left:353.5px;top:763.55px;width:6px;height:1px;background:#666"></div>
<div style="left:353.5px;top:784.37px;width:6px;height:1px;background:#666"></div>
<div style="left:353.5px;top:805.19px;width:6px;height:1px;background:#666"></div>
<div style="left:353.5px;top:826.01px;width:6px;height:1px;background:#666"></div>
<div style="left:353.5px;top:846.83px;width:6px;height:1px;background:#666"></div>
<div style="left:353.5px;top:867.65px;width:6px;height:1px;background:#666"></div>
<div style="left:353.5px;top:888.47px;width:6px;height:1px;background:#666"></div>
<div style="left:353.5px;top:909.29px;width:6px;height:1px;background:#666"></div>
<div style="left:353.5px;top:930.11px;width:6px;height:1px;background:#666"></div>
<div style="left:353.5px;top:950.93px;width:6px;height:1px;background:#666"></div>
<div style="left:353.5px;top:971.75px;width:6px;height:1px;background:#666"></div>
<div style="left:600px;top:141px;width:141px;height:16px;background:#c6c6c6"></div>
<div style="left:743px;top:141px;width:823px;height:16px;background:#fff"></div>
<div style="left:1568px;top:141px;width:94px;height:16px;background:#c6c6c6"></div>
<div class="t ls" style="top:143.63px;font-size:9.5px;line-height:12px;color:#555;left:616.01px;width:24px;text-align:center;">6</div>
<div class="t ls" style="top:143.63px;font-size:9.5px;line-height:12px;color:#555;left:654.15px;width:24px;text-align:center;">4</div>
<div class="t ls" style="top:143.63px;font-size:9.5px;line-height:12px;color:#555;left:692.29px;width:24px;text-align:center;">2</div>
<div class="t ls" style="top:143.63px;font-size:9.5px;line-height:12px;color:#555;left:768.57px;width:24px;text-align:center;">2</div>
<div class="t ls" style="top:143.63px;font-size:9.5px;line-height:12px;color:#555;left:806.71px;width:24px;text-align:center;">4</div>
<div class="t ls" style="top:143.63px;font-size:9.5px;line-height:12px;color:#555;left:844.85px;width:24px;text-align:center;">6</div>
<div class="t ls" style="top:143.63px;font-size:9.5px;line-height:12px;color:#555;left:882.99px;width:24px;text-align:center;">8</div>
<div class="t ls" style="top:143.63px;font-size:9.5px;line-height:12px;color:#555;left:921.13px;width:24px;text-align:center;">10</div>
<div class="t ls" style="top:143.63px;font-size:9.5px;line-height:12px;color:#555;left:959.27px;width:24px;text-align:center;">12</div>
<div class="t ls" style="top:143.63px;font-size:9.5px;line-height:12px;color:#555;left:997.41px;width:24px;text-align:center;">14</div>
<div class="t ls" style="top:143.63px;font-size:9.5px;line-height:12px;color:#555;left:1035.55px;width:24px;text-align:center;">16</div>
<div class="t ls" style="top:143.63px;font-size:9.5px;line-height:12px;color:#555;left:1073.69px;width:24px;text-align:center;">18</div>
<div class="t ls" style="top:143.63px;font-size:9.5px;line-height:12px;color:#555;left:1111.83px;width:24px;text-align:center;">20</div>
<div class="t ls" style="top:143.63px;font-size:9.5px;line-height:12px;color:#555;left:1149.97px;width:24px;text-align:center;">22</div>
<div class="t ls" style="top:143.63px;font-size:9.5px;line-height:12px;color:#555;left:1188.11px;width:24px;text-align:center;">24</div>
<div class="t ls" style="top:143.63px;font-size:9.5px;line-height:12px;color:#555;left:1226.25px;width:24px;text-align:center;">26</div>
<div class="t ls" style="top:143.63px;font-size:9.5px;line-height:12px;color:#555;left:1264.39px;width:24px;text-align:center;">28</div>
<div class="t ls" style="top:143.63px;font-size:9.5px;line-height:12px;color:#555;left:1302.53px;width:24px;text-align:center;">30</div>
<div class="t ls" style="top:143.63px;font-size:9.5px;line-height:12px;color:#555;left:1340.67px;width:24px;text-align:center;">32</div>
<div class="t ls" style="top:143.63px;font-size:9.5px;line-height:12px;color:#555;left:1378.81px;width:24px;text-align:center;">34</div>
<div class="t ls" style="top:143.63px;font-size:9.5px;line-height:12px;color:#555;left:1416.95px;width:24px;text-align:center;">36</div>
<div class="t ls" style="top:143.63px;font-size:9.5px;line-height:12px;color:#555;left:1455.09px;width:24px;text-align:center;">38</div>
<div class="t ls" style="top:143.63px;font-size:9.5px;line-height:12px;color:#555;left:1493.23px;width:24px;text-align:center;">40</div>
<div class="t ls" style="top:143.63px;font-size:9.5px;line-height:12px;color:#555;left:1531.37px;width:24px;text-align:center;">42</div>
<div class="t ls" style="top:143.63px;font-size:9.5px;line-height:12px;color:#555;left:1569.51px;width:24px;text-align:center;">44</div>
<div class="t ls" style="top:143.63px;font-size:9.5px;line-height:12px;color:#555;left:1607.65px;width:24px;text-align:center;">46</div>
<div class="t ls" style="top:143.63px;font-size:9.5px;line-height:12px;color:#555;left:1645.79px;width:24px;text-align:center;">48</div>
<div style="left:618.47px;top:147px;width:1px;height:6px;background:#555"></div>
<div style="left:637.55px;top:147px;width:1px;height:6px;background:#555"></div>
<div style="left:656.61px;top:147px;width:1px;height:6px;background:#555"></div>
<div style="left:675.68px;top:147px;width:1px;height:6px;background:#555"></div>
<div style="left:694.76px;top:147px;width:1px;height:6px;background:#555"></div>
<div style="left:713.82px;top:147px;width:1px;height:6px;background:#555"></div>
<div style="left:732.89px;top:147px;width:1px;height:6px;background:#555"></div>
<div style="left:751.97px;top:147px;width:1px;height:6px;background:#555"></div>
<div style="left:771.03px;top:147px;width:1px;height:6px;background:#555"></div>
<div style="left:790.11px;top:147px;width:1px;height:6px;background:#555"></div>
<div style="left:809.18px;top:147px;width:1px;height:6px;background:#555"></div>
<div style="left:828.24px;top:147px;width:1px;height:6px;background:#555"></div>
<div style="left:847.32px;top:147px;width:1px;height:6px;background:#555"></div>
<div style="left:866.39px;top:147px;width:1px;height:6px;background:#555"></div>
<div style="left:885.45px;top:147px;width:1px;height:6px;background:#555"></div>
<div style="left:904.53px;top:147px;width:1px;height:6px;background:#555"></div>
<div style="left:923.59px;top:147px;width:1px;height:6px;background:#555"></div>
<div style="left:942.66px;top:147px;width:1px;height:6px;background:#555"></div>
<div style="left:961.74px;top:147px;width:1px;height:6px;background:#555"></div>
<div style="left:980.8px;top:147px;width:1px;height:6px;background:#555"></div>
<div style="left:999.88px;top:147px;width:1px;height:6px;background:#555"></div>
<div style="left:1018.95px;top:147px;width:1px;height:6px;background:#555"></div>
<div style="left:1038.01px;top:147px;width:1px;height:6px;background:#555"></div>
<div style="left:1057.09px;top:147px;width:1px;height:6px;background:#555"></div>
<div style="left:1076.16px;top:147px;width:1px;height:6px;background:#555"></div>
<div style="left:1095.22px;top:147px;width:1px;height:6px;background:#555"></div>
<div style="left:1114.3px;top:147px;width:1px;height:6px;background:#555"></div>
<div style="left:1133.36px;top:147px;width:1px;height:6px;background:#555"></div>
<div style="left:1152.43px;top:147px;width:1px;height:6px;background:#555"></div>
<div style="left:1171.51px;top:147px;width:1px;height:6px;background:#555"></div>
<div style="left:1190.57px;top:147px;width:1px;height:6px;background:#555"></div>
<div style="left:1209.64px;top:147px;width:1px;height:6px;background:#555"></div>
<div style="left:1228.72px;top:147px;width:1px;height:6px;background:#555"></div>
<div style="left:1247.78px;top:147px;width:1px;height:6px;background:#555"></div>
<div style="left:1266.86px;top:147px;width:1px;height:6px;background:#555"></div>
<div style="left:1285.93px;top:147px;width:1px;height:6px;background:#555"></div>
<div style="left:1304.99px;top:147px;width:1px;height:6px;background:#555"></div>
<div style="left:1324.07px;top:147px;width:1px;height:6px;background:#555"></div>
<div style="left:1343.14px;top:147px;width:1px;height:6px;background:#555"></div>
<div style="left:1362.2px;top:147px;width:1px;height:6px;background:#555"></div>
<div style="left:1381.28px;top:147px;width:1px;height:6px;background:#555"></div>
<div style="left:1400.35px;top:147px;width:1px;height:6px;background:#555"></div>
<div style="left:1419.41px;top:147px;width:1px;height:6px;background:#555"></div>
<div style="left:1438.49px;top:147px;width:1px;height:6px;background:#555"></div>
<div style="left:1457.56px;top:147px;width:1px;height:6px;background:#555"></div>
<div style="left:1476.62px;top:147px;width:1px;height:6px;background:#555"></div>
<div style="left:1495.7px;top:147px;width:1px;height:6px;background:#555"></div>
<div style="left:1514.76px;top:147px;width:1px;height:6px;background:#555"></div>
<div style="left:1533.84px;top:147px;width:1px;height:6px;background:#555"></div>
<div style="left:1552.9px;top:147px;width:1px;height:6px;background:#555"></div>
<div style="left:1571.97px;top:147px;width:1px;height:6px;background:#555"></div>
<div style="left:1591.05px;top:147px;width:1px;height:6px;background:#555"></div>
<div style="left:1610.11px;top:147px;width:1px;height:6px;background:#555"></div>
<div style="left:1629.18px;top:147px;width:1px;height:6px;background:#555"></div>
<div style="left:1648.26px;top:147px;width:1px;height:6px;background:#555"></div>
<div style="left:601px;top:166px;width:1062px;height:823px;background:#fff;border:1px solid #c6c6c6;border-top:none;box-sizing:border-box"></div>
<svg style="left:755.5px;top:138.5px;" width="13" height="27" viewBox="0 0 13 27"><path d="M0.5 0.5h11v2.5L6 8.5 0.5 3z" fill="#fff" stroke="#777"/><path d="M6 10.5L11.5 16v2h-11v-2z" fill="#fff" stroke="#777"/><rect x="0.5" y="18" width="11" height="8" fill="#fff" stroke="#777"/></svg>
<svg style="left:1529.3px;top:150px;" width="13" height="11" viewBox="0 0 13 11"><path d="M6 0.5L11.5 5.5v5h-11v-5z" fill="#fff" stroke="#777"/></svg>
<div style="left:752px;top:166px;width:1px;height:301px;background:#000"></div>
<div style="left:802px;top:166px;width:1px;height:301px;background:#000"></div>
<div style="left:909px;top:166px;width:1px;height:301px;background:#000"></div>
<div style="left:1016px;top:166px;width:1px;height:301px;background:#000"></div>
<div style="left:1110px;top:166px;width:1px;height:301px;background:#000"></div>
<div style="left:1207px;top:166px;width:1px;height:301px;background:#000"></div>
<div style="left:1308px;top:166px;width:1px;height:301px;background:#000"></div>
<div style="left:1405px;top:166px;width:1px;height:301px;background:#000"></div>
<div style="left:1491px;top:166px;width:1px;height:301px;background:#000"></div>
<div style="left:752px;top:187px;width:740px;height:1px;background:#000"></div>
<div style="left:752px;top:234px;width:740px;height:1px;background:#000"></div>
<div style="left:752px;top:280px;width:740px;height:1px;background:#000"></div>
<div style="left:752px;top:327px;width:740px;height:1px;background:#000"></div>
<div style="left:752px;top:373px;width:740px;height:1px;background:#000"></div>
<div style="left:752px;top:420px;width:740px;height:1px;background:#000"></div>
<div style="left:752px;top:466px;width:740px;height:1px;background:#000"></div>
<svg style="left:753px;top:193px" width="12" height="11" viewBox="0 0 12 11" preserveAspectRatio="none"><use href="#rt"/></svg>
<svg style="left:803px;top:193px" width="12" height="11" viewBox="0 0 12 11" preserveAspectRatio="none"><use href="#rt"/></svg>
<svg style="left:910px;top:193px" width="12" height="11" viewBox="0 0 12 11" preserveAspectRatio="none"><use href="#rt"/></svg>
<svg style="left:1017px;top:193px" width="12" height="11" viewBox="0 0 12 11" preserveAspectRatio="none"><use href="#rt"/></svg>
<svg style="left:1111px;top:193px" width="12" height="11" viewBox="0 0 12 11" preserveAspectRatio="none"><use href="#rt"/></svg>
<svg style="left:1208px;top:193px" width="12" height="11" viewBox="0 0 12 11" preserveAspectRatio="none"><use href="#rt"/></svg>
<svg style="left:1309px;top:193px" width="12" height="11" viewBox="0 0 12 11" preserveAspectRatio="none"><use href="#rt"/></svg>
<svg style="left:1406px;top:193px" width="12" height="11" viewBox="0 0 12 11" preserveAspectRatio="none"><use href="#rt"/></svg>
<svg style="left:753px;top:240px" width="12" height="11" viewBox="0 0 12 11" preserveAspectRatio="none"><use href="#rt"/></svg>
<svg style="left:803px;top:240px" width="12" height="11" viewBox="0 0 12 11" preserveAspectRatio="none"><use href="#rt"/></svg>
<svg style="left:910px;top:240px" width="12" height="11" viewBox="0 0 12 11" preserveAspectRatio="none"><use href="#rt"/></svg>
<svg style="left:1017px;top:240px" width="12" height="11" viewBox="0 0 12 11" preserveAspectRatio="none"><use href="#rt"/></svg>
<svg style="left:1111px;top:240px" width="12" height="11" viewBox="0 0 12 11" preserveAspectRatio="none"><use href="#rt"/></svg>
<svg style="left:1208px;top:240px" width="12" height="11" viewBox="0 0 12 11" preserveAspectRatio="none"><use href="#rt"/></svg>
<svg style="left:1309px;top:240px" width="12" height="11" viewBox="0 0 12 11" preserveAspectRatio="none"><use href="#rt"/></svg>
<svg style="left:1406px;top:240px" width="12" height="11" viewBox="0 0 12 11" preserveAspectRatio="none"><use href="#rt"/></svg>
<svg style="left:753px;top:286px" width="12" height="11" viewBox="0 0 12 11" preserveAspectRatio="none"><use href="#rt"/></svg>
<svg style="left:803px;top:286px" width="12" height="11" viewBox="0 0 12 11" preserveAspectRatio="none"><use href="#rt"/></svg>
<svg style="left:910px;top:286px" width="12" height="11" viewBox="0 0 12 11" preserveAspectRatio="none"><use href="#rt"/></svg>
<svg style="left:1017px;top:286px" width="12" height="11" viewBox="0 0 12 11" preserveAspectRatio="none"><use href="#rt"/></svg>
<svg style="left:1111px;top:286px" width="12" height="11" viewBox="0 0 12 11" preserveAspectRatio="none"><use href="#rt"/></svg>
<svg style="left:1208px;top:286px" width="12" height="11" viewBox="0 0 12 11" preserveAspectRatio="none"><use href="#rt"/></svg>
<svg style="left:1309px;top:286px" width="12" height="11" viewBox="0 0 12 11" preserveAspectRatio="none"><use href="#rt"/></svg>
<svg style="left:1406px;top:286px" width="12" height="11" viewBox="0 0 12 11" preserveAspectRatio="none"><use href="#rt"/></svg>
<svg style="left:753px;top:333px" width="12" height="11" viewBox="0 0 12 11" preserveAspectRatio="none"><use href="#rt"/></svg>
<svg style="left:803px;top:333px" width="12" height="11" viewBox="0 0 12 11" preserveAspectRatio="none"><use href="#rt"/></svg>
<svg style="left:910px;top:333px" width="12" height="11" viewBox="0 0 12 11" preserveAspectRatio="none"><use href="#rt"/></svg>
<svg style="left:1017px;top:333px" width="12" height="11" viewBox="0 0 12 11" preserveAspectRatio="none"><use href="#rt"/></svg>
<svg style="left:1111px;top:333px" width="12" height="11" viewBox="0 0 12 11" preserveAspectRatio="none"><use href="#rt"/></svg>
<svg style="left:1208px;top:333px" width="12" height="11" viewBox="0 0 12 11" preserveAspectRatio="none"><use href="#rt"/></svg>
<svg style="left:1309px;top:333px" width="12" height="11" viewBox="0 0 12 11" preserveAspectRatio="none"><use href="#rt"/></svg>
<svg style="left:1406px;top:333px" width="12" height="11" viewBox="0 0 12 11" preserveAspectRatio="none"><use href="#rt"/></svg>
<svg style="left:753px;top:379px" width="12" height="11" viewBox="0 0 12 11" preserveAspectRatio="none"><use href="#rt"/></svg>
<svg style="left:803px;top:379px" width="12" height="11" viewBox="0 0 12 11" preserveAspectRatio="none"><use href="#rt"/></svg>
<svg style="left:910px;top:379px" width="12" height="11" viewBox="0 0 12 11" preserveAspectRatio="none"><use href="#rt"/></svg>
<svg style="left:1017px;top:379px" width="12" height="11" viewBox="0 0 12 11" preserveAspectRatio="none"><use href="#rt"/></svg>
<svg style="left:1111px;top:379px" width="12" height="11" viewBox="0 0 12 11" preserveAspectRatio="none"><use href="#rt"/></svg>
<svg style="left:1208px;top:379px" width="12" height="11" viewBox="0 0 12 11" preserveAspectRatio="none"><use href="#rt"/></svg>
<svg style="left:1309px;top:379px" width="12" height="11" viewBox="0 0 12 11" preserveAspectRatio="none"><use href="#rt"/></svg>
<svg style="left:1406px;top:379px" width="12" height="11" viewBox="0 0 12 11" preserveAspectRatio="none"><use href="#rt"/></svg>
<svg style="left:753px;top:426px" width="12" height="11" viewBox="0 0 12 11" preserveAspectRatio="none"><use href="#rt"/></svg>
<svg style="left:803px;top:426px" width="12" height="11" viewBox="0 0 12 11" preserveAspectRatio="none"><use href="#rt"/></svg>
<svg style="left:910px;top:426px" width="12" height="11" viewBox="0 0 12 11" preserveAspectRatio="none"><use href="#rt"/></svg>
<svg style="left:1017px;top:426px" width="12" height="11" viewBox="0 0 12 11" preserveAspectRatio="none"><use href="#rt"/></svg>
<svg style="left:1111px;top:426px" width="12" height="11" viewBox="0 0 12 11" preserveAspectRatio="none"><use href="#rt"/></svg>
<svg style="left:1208px;top:426px" width="12" height="11" viewBox="0 0 12 11" preserveAspectRatio="none"><use href="#rt"/></svg>
<svg style="left:1309px;top:426px" width="12" height="11" viewBox="0 0 12 11" preserveAspectRatio="none"><use href="#rt"/></svg>
<svg style="left:1406px;top:426px" width="12" height="11" viewBox="0 0 12 11" preserveAspectRatio="none"><use href="#rt"/></svg>
<div class="t lr" style="top:478.81px;font-size:19px;line-height:25px;color:#000;left:762.6px;"><span class=c>注</span><span class=p><span style="position:relative;left:.3em">:</span></span>1<span class=p><span style="position:relative;top:.5em;left:.12em">`</span></span><span class=c>投标人应根据第</span><span class="g g3"></span><span class=c>章评标办法前附表师资及管理人员的要求填报此表并提供证明材</span></div>
<div class="t lr" style="top:515.31px;font-size:19px;line-height:25px;color:#000;left:762.6px;"><span class=c>料</span><span class=p><span style="position:relative;top:.55em;left:.05em">°</span></span></div>
<svg style="left:800.5px;top:522px" width="12" height="11" viewBox="0 0 12 11" preserveAspectRatio="none"><use href="#rt"/></svg>
<div class="t lr" style="top:563.31px;font-size:19px;line-height:25px;color:#000;left:762.6px;">2<span class=p><span style="position:relative;top:.5em;left:.12em">`</span></span><span class=c>投标人须按文件规定的格式要求填报人员名单和相关信息</span><span class=p><span style="position:relative;left:.1em">,</span></span><span class=c>并提供上述人员资格证书扫描</span></div>
<div style="left:737px;top:546px;width:535px;height:48px;border:4px solid #d0111f;box-sizing:border-box"></div>
<div class="t lr" style="top:602.31px;font-size:19px;line-height:25px;color:#000;left:762.6px;"><span class=c>件及社保证明</span><span class=p><span style="position:relative;top:.55em;left:.05em">°</span></span></div>
<svg style="left:800px;top:623px;" width="80" height="4" viewBox="0 0 80 4"><path d="M0 1.5l1.5 1.5l1.5 -1.5l1.5 1.5l1.5 -1.5l1.5 1.5l1.5 -1.5l1.5 1.5l1.5 -1.5l1.5 1.5l1.5 -1.5l1.5 1.5l1.5 -1.5l1.5 1.5l1.5 -1.5l1.5 1.5l1.5 -1.5l1.5 1.5l1.5 -1.5l1.5 1.5l1.5 -1.5l1.5 1.5l1.5 -1.5l1.5 1.5l1.5 -1.5l1.5 1.5l1.5 -1.5l1.5 1.5l1.5 -1.5l1.5 1.5l1.5 -1.5l1.5 1.5l1.5 -1.5l1.5 1.5l1.5 -1.5l1.5 1.5l1.5 -1.5l1.5 1.5l1.5 -1.5l1.5 1.5l1.5 -1.5l1.5 1.5l1.5 -1.5l1.5 1.5l1.5 -1.5l1.5 1.5l1.5 -1.5l1.5 1.5l1.5 -1.5l1.5 1.5l1.5 -1.5l1.5 1.5l1.5 -1.5" fill="none" stroke="#3b6fd8" stroke-width="0.9"/></svg>
<svg style="left:895px;top:609px" width="12" height="11" viewBox="0 0 12 11" preserveAspectRatio="none"><use href="#rt"/></svg>
<div class="t lr" style="top:649.31px;font-size:19px;line-height:25px;color:#000;left:762.6px;">3<span class=p><span style="position:relative;top:.5em;left:.12em">`</span></span><span class=c>投标人对其提供的信息的真实性负责</span><span class=p><span style="position:relative;left:.1em">,</span></span><span class=c>如有弄虚作假情况</span><span class=p><span style="position:relative;left:.1em">,</span></span><span class=c>经核实</span><span class=p><span style="position:relative;left:.1em">,</span></span><span class=c>否决其投标资格并承</span></div>
<div class="t lr" style="top:687.31px;font-size:19px;line-height:25px;color:#000;left:762.6px;"><span class=c>担相应的法律责任</span><span class=p><span style="position:relative;top:.55em;left:.05em">°</span></span></div>
<svg style="left:933px;top:694px" width="12" height="11" viewBox="0 0 12 11" preserveAspectRatio="none"><use href="#rt"/></svg>
<div class="t lr" style="top:734.81px;font-size:19px;line-height:25px;color:#000;left:1282.5px;"><span class=c>投标人</span><span class=p><span style="position:relative;left:.3em">:</span></span></div>
<div style="left:1359px;top:755px;width:85px;height:1px;background:#000"></div>
<div class="t lr" style="top:734.81px;font-size:19px;line-height:25px;color:#000;left:1447px;">(<span class=c>盖单位章</span><span class=p><span style="position:relative;left:.15em">)</span></span></div>
<svg style="left:1549px;top:742px" width="12" height="11" viewBox="0 0 12 11" preserveAspectRatio="none"><use href="#rt"/></svg>
<div style="left:712px;top:916px;width:31px;height:1px;background:#a6a6a6"></div>
<div style="left:742px;top:916px;width:1px;height:31px;background:#a6a6a6"></div>
<div style="left:1570px;top:916px;width:31px;height:1px;background:#a6a6a6"></div>
<div style="left:1570px;top:916px;width:1px;height:31px;background:#a6a6a6"></div>
<div style="left:1797px;top:982px;width:40px;height:40px;border-radius:50%;background:#eef1ef"></div><div style="left:1801px;top:985.5px;width:32px;height:32px;border-radius:50%;background:#7bd39b"></div><div style="left:1816px;top:990px;width:14px;height:14px;border-radius:50%;background:#eef1ef"></div>
<div class="t lr" style="top:913.21px;font-size:17px;line-height:22px;color:#777;left:1145px;">114</div>
<svg style="left:1171px;top:919px" width="12" height="11" viewBox="0 0 12 11" preserveAspectRatio="none"><use href="#rt"/></svg>
</div></div>
<div style="position:absolute;left:0;top:995px;width:3796px;height:1px;background:#c8c8c8"></div>
</body></html>
